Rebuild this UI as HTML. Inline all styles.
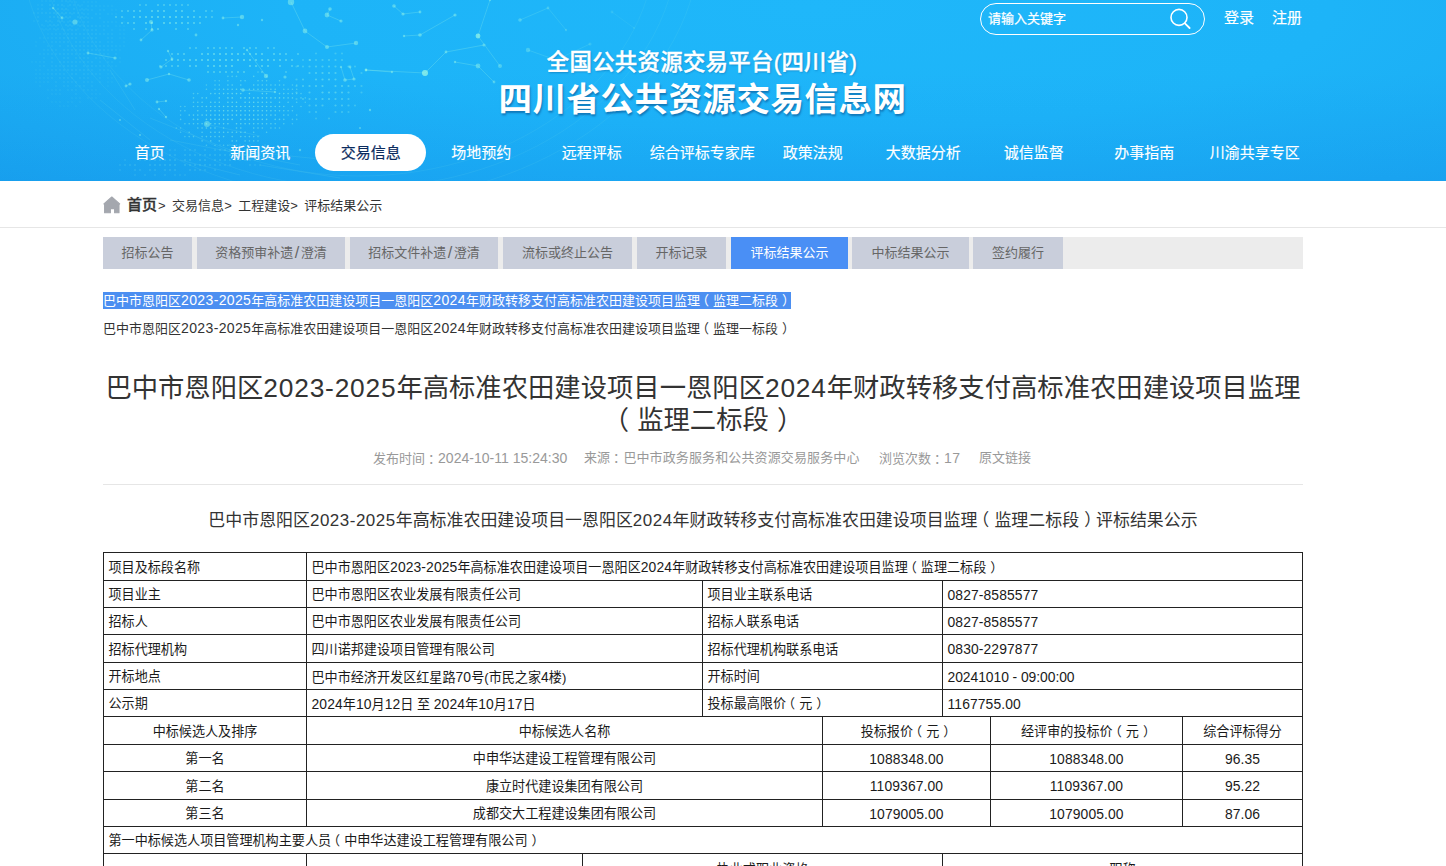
<!DOCTYPE html>
<html lang="zh-CN">
<head>
<meta charset="utf-8">
<title>四川省公共资源交易信息网</title>
<style>
*{margin:0;padding:0;box-sizing:border-box;}
html,body{width:1446px;height:866px;overflow:hidden;background:#fff;}
body{font-family:"Liberation Sans","Noto Sans CJK SC",sans-serif;font-size:13px;color:#333;position:relative;}
a{color:inherit;text-decoration:none;}
i{font-style:normal;letter-spacing:0.03em;}
b.pl,b.pr{font-weight:inherit;position:relative;}
b.pl{left:-0.31em;}
b.pr{left:0.31em;}
b.pc{font-weight:inherit;position:relative;left:0.22em;}
.lst i,.meta i{font-size:1.08em;letter-spacing:0.025em;}
.title i{letter-spacing:0.03em;}
.sub i{letter-spacing:0.031em;}
.header{position:absolute;left:0;top:0;width:1446px;height:181px;overflow:hidden;
 background:linear-gradient(180deg,rgba(0,80,220,0) 40%,rgba(0,80,220,0.09) 100%),radial-gradient(ellipse 80% 150% at 56% 5%,#1fb7fa 0%,#1db4f8 45%,#1babf2 80%,#19a5ee 100%);}
.header svg.net{position:absolute;left:0;top:0;}
.search{position:absolute;left:980px;top:3px;width:225px;height:32px;border:1px solid #fff;border-radius:16px;}
.search span{position:absolute;left:7px;top:0;line-height:29px;font-size:13px;color:#fff;-webkit-text-stroke:0.25px #fff;}
.search svg{position:absolute;left:186px;top:3px;}
.login{position:absolute;top:8px;font-size:15px;line-height:20px;color:#fff;-webkit-text-stroke:0.2px #fff;}
.t1{position:absolute;left:0;width:1404px;text-align:center;top:47px;font-size:22.4px;letter-spacing:0.3px;line-height:32px;color:#fff;font-weight:500;-webkit-text-stroke:0.4px #fff;text-shadow:1px 1px 2px rgba(0,60,120,0.35);white-space:nowrap;}
.t2{position:absolute;left:0;width:1405px;text-align:center;top:77.5px;font-size:33.5px;letter-spacing:0.5px;line-height:44px;color:#fff;font-weight:700;text-shadow:1px 2px 2px rgba(0,50,110,0.45);white-space:nowrap;}
.nav{position:absolute;left:94.5px;top:134px;height:37px;display:flex;}
.nav a{display:block;width:110.5px;height:37px;line-height:38px;text-align:center;font-size:15px;color:#fff;border-radius:19px;white-space:nowrap;-webkit-text-stroke:0.15px #fff;}
.nav a.on{background:#fff;color:#0b2b5e;-webkit-text-stroke:0.2px #0b2b5e;width:111px;margin:0 -0.25px;}
.crumb{position:absolute;left:103px;top:181px;width:1200px;height:46px;}
.cline{position:absolute;left:0;top:227px;width:1446px;height:1px;background:#e6e6e6;}
.crumb svg{position:absolute;left:0.3px;top:15.2px;}
.crumb i{letter-spacing:2.9px;}
i.sl{letter-spacing:0;padding:0 1.5px;font-size:1.25em;line-height:1;position:relative;top:0.5px;}
.crumb .h{position:absolute;left:24px;top:14px;font-size:15px;line-height:20px;font-weight:500;-webkit-text-stroke:0.35px #333;color:#333;}
.crumb .p{position:absolute;left:55px;top:15px;font-size:13px;line-height:20px;color:#333;white-space:pre;}
.tabs{position:absolute;left:103px;top:237px;width:1200px;height:32px;background:#ececec;}
.tabs a{position:absolute;top:0;height:32px;line-height:32px;text-align:center;font-size:13px;color:#666;background:#c9cedb;white-space:nowrap;}
.tabs a.on{background:#4a8ff5;color:#fff;}
.lst{position:absolute;left:103px;font-size:13px;line-height:17px;color:#333;white-space:nowrap;}
.lst.sel span{background:#4c8ff1;color:#fff;display:inline-block;height:17px;}
.title{position:absolute;left:103px;width:1200px;top:372.2px;text-align:center;font-size:26.33px;line-height:32px;color:#333;font-weight:400;white-space:nowrap;}
.meta{position:absolute;left:0;width:1446px;top:448px;font-size:13px;line-height:20px;color:#999;white-space:nowrap;}
.meta span{position:absolute;top:0;}
.hr{position:absolute;left:103px;width:1200px;top:484px;height:1px;background:#e6e6e6;}
.sub{position:absolute;left:103px;width:1200px;top:509.2px;text-align:center;font-size:16.95px;line-height:24px;color:#333;white-space:nowrap;}
table{position:absolute;left:103px;top:552px;width:1199px;border-collapse:collapse;table-layout:fixed;font-size:13.1px;color:#1a1a1a;}
td i{font-size:1.06em;letter-spacing:0.008em;}
td{border:1px solid #222;height:27px;padding:2px 0 0 4.5px;line-height:18px;vertical-align:middle;white-space:nowrap;overflow:hidden;}
td.c{text-align:center;padding:2px 0 0 0;}
tr.h28 td{height:28px;}
</style>
</head>
<body>
<div class="header">
 <svg class="net" width="700" height="181" viewBox="0 0 700 181"><circle cx="140.0" cy="5.0" r="1.1" fill="#a8ffe4" opacity="0.28"/><circle cx="146.0" cy="5.0" r="1.1" fill="#a8ffe4" opacity="0.30"/><circle cx="158.0" cy="5.0" r="1.1" fill="#a8ffe4" opacity="0.33"/><circle cx="164.0" cy="5.0" r="1.1" fill="#a8ffe4" opacity="0.33"/><circle cx="170.0" cy="5.0" r="1.1" fill="#a8ffe4" opacity="0.33"/><circle cx="176.0" cy="5.0" r="1.1" fill="#a8ffe4" opacity="0.32"/><circle cx="182.0" cy="5.0" r="1.1" fill="#a8ffe4" opacity="0.31"/><circle cx="188.0" cy="5.0" r="1.1" fill="#a8ffe4" opacity="0.29"/><circle cx="122.0" cy="11.0" r="1.1" fill="#a8ffe4" opacity="0.31"/><circle cx="128.0" cy="11.0" r="1.1" fill="#a8ffe4" opacity="0.35"/><circle cx="134.0" cy="11.0" r="1.1" fill="#a8ffe4" opacity="0.38"/><circle cx="140.0" cy="11.0" r="1.1" fill="#a8ffe4" opacity="0.40"/><circle cx="152.0" cy="11.0" r="1.1" fill="#a8ffe4" opacity="0.44"/><circle cx="158.0" cy="11.0" r="1.1" fill="#a8ffe4" opacity="0.45"/><circle cx="164.0" cy="11.0" r="1.1" fill="#a8ffe4" opacity="0.45"/><circle cx="176.0" cy="11.0" r="1.1" fill="#a8ffe4" opacity="0.44"/><circle cx="182.0" cy="11.0" r="1.1" fill="#a8ffe4" opacity="0.43"/><circle cx="194.0" cy="11.0" r="1.1" fill="#a8ffe4" opacity="0.39"/><circle cx="206.0" cy="11.0" r="1.1" fill="#a8ffe4" opacity="0.33"/><circle cx="212.0" cy="11.0" r="1.1" fill="#a8ffe4" opacity="0.29"/><circle cx="116.0" cy="17.0" r="1.1" fill="#a8ffe4" opacity="0.32"/><circle cx="122.0" cy="17.0" r="1.1" fill="#a8ffe4" opacity="0.36"/><circle cx="134.0" cy="17.0" r="1.1" fill="#a8ffe4" opacity="0.43"/><circle cx="140.0" cy="17.0" r="1.1" fill="#a8ffe4" opacity="0.45"/><circle cx="146.0" cy="17.0" r="1.1" fill="#a8ffe4" opacity="0.47"/><circle cx="152.0" cy="17.0" r="1.1" fill="#a8ffe4" opacity="0.49"/><circle cx="158.0" cy="17.0" r="1.1" fill="#a8ffe4" opacity="0.50"/><circle cx="164.0" cy="17.0" r="1.1" fill="#a8ffe4" opacity="0.50"/><circle cx="170.0" cy="17.0" r="1.1" fill="#a8ffe4" opacity="0.50"/><circle cx="176.0" cy="17.0" r="1.1" fill="#a8ffe4" opacity="0.49"/><circle cx="182.0" cy="17.0" r="1.1" fill="#a8ffe4" opacity="0.48"/><circle cx="188.0" cy="17.0" r="1.1" fill="#a8ffe4" opacity="0.46"/><circle cx="194.0" cy="17.0" r="1.1" fill="#a8ffe4" opacity="0.44"/><circle cx="200.0" cy="17.0" r="1.1" fill="#a8ffe4" opacity="0.41"/><circle cx="206.0" cy="17.0" r="1.1" fill="#a8ffe4" opacity="0.37"/><circle cx="212.0" cy="17.0" r="1.1" fill="#a8ffe4" opacity="0.33"/><circle cx="122.0" cy="23.0" r="1.1" fill="#a8ffe4" opacity="0.34"/><circle cx="128.0" cy="23.0" r="1.1" fill="#a8ffe4" opacity="0.37"/><circle cx="134.0" cy="23.0" r="1.1" fill="#a8ffe4" opacity="0.40"/><circle cx="146.0" cy="23.0" r="1.1" fill="#a8ffe4" opacity="0.45"/><circle cx="152.0" cy="23.0" r="1.1" fill="#a8ffe4" opacity="0.46"/><circle cx="164.0" cy="23.0" r="1.1" fill="#a8ffe4" opacity="0.47"/><circle cx="170.0" cy="23.0" r="1.1" fill="#a8ffe4" opacity="0.47"/><circle cx="176.0" cy="23.0" r="1.1" fill="#a8ffe4" opacity="0.47"/><circle cx="182.0" cy="23.0" r="1.1" fill="#a8ffe4" opacity="0.45"/><circle cx="188.0" cy="23.0" r="1.1" fill="#a8ffe4" opacity="0.44"/><circle cx="194.0" cy="23.0" r="1.1" fill="#a8ffe4" opacity="0.41"/><circle cx="200.0" cy="23.0" r="1.1" fill="#a8ffe4" opacity="0.38"/><circle cx="134.0" cy="29.0" r="1.1" fill="#a8ffe4" opacity="0.31"/><circle cx="146.0" cy="29.0" r="1.1" fill="#a8ffe4" opacity="0.35"/><circle cx="152.0" cy="29.0" r="1.1" fill="#a8ffe4" opacity="0.37"/><circle cx="158.0" cy="29.0" r="1.1" fill="#a8ffe4" opacity="0.38"/><circle cx="176.0" cy="29.0" r="1.1" fill="#a8ffe4" opacity="0.37"/><circle cx="188.0" cy="29.0" r="1.1" fill="#a8ffe4" opacity="0.34"/><circle cx="190.0" cy="48.0" r="1.1" fill="#a8ffe4" opacity="0.32"/><circle cx="196.0" cy="48.0" r="1.1" fill="#a8ffe4" opacity="0.33"/><circle cx="208.0" cy="48.0" r="1.1" fill="#a8ffe4" opacity="0.36"/><circle cx="214.0" cy="48.0" r="1.1" fill="#a8ffe4" opacity="0.36"/><circle cx="220.0" cy="48.0" r="1.1" fill="#a8ffe4" opacity="0.37"/><circle cx="226.0" cy="48.0" r="1.1" fill="#a8ffe4" opacity="0.37"/><circle cx="232.0" cy="48.0" r="1.1" fill="#a8ffe4" opacity="0.37"/><circle cx="244.0" cy="48.0" r="1.1" fill="#a8ffe4" opacity="0.37"/><circle cx="250.0" cy="48.0" r="1.1" fill="#a8ffe4" opacity="0.36"/><circle cx="256.0" cy="48.0" r="1.1" fill="#a8ffe4" opacity="0.36"/><circle cx="268.0" cy="48.0" r="1.1" fill="#a8ffe4" opacity="0.33"/><circle cx="274.0" cy="48.0" r="1.1" fill="#a8ffe4" opacity="0.32"/><circle cx="172.0" cy="54.0" r="1.1" fill="#a8ffe4" opacity="0.35"/><circle cx="178.0" cy="54.0" r="1.1" fill="#a8ffe4" opacity="0.38"/><circle cx="184.0" cy="54.0" r="1.1" fill="#a8ffe4" opacity="0.39"/><circle cx="202.0" cy="54.0" r="1.1" fill="#a8ffe4" opacity="0.44"/><circle cx="208.0" cy="54.0" r="1.1" fill="#a8ffe4" opacity="0.45"/><circle cx="214.0" cy="54.0" r="1.1" fill="#a8ffe4" opacity="0.46"/><circle cx="220.0" cy="54.0" r="1.1" fill="#a8ffe4" opacity="0.46"/><circle cx="226.0" cy="54.0" r="1.1" fill="#a8ffe4" opacity="0.47"/><circle cx="232.0" cy="54.0" r="1.1" fill="#a8ffe4" opacity="0.47"/><circle cx="238.0" cy="54.0" r="1.1" fill="#a8ffe4" opacity="0.47"/><circle cx="244.0" cy="54.0" r="1.1" fill="#a8ffe4" opacity="0.46"/><circle cx="250.0" cy="54.0" r="1.1" fill="#a8ffe4" opacity="0.46"/><circle cx="256.0" cy="54.0" r="1.1" fill="#a8ffe4" opacity="0.45"/><circle cx="262.0" cy="54.0" r="1.1" fill="#a8ffe4" opacity="0.44"/><circle cx="274.0" cy="54.0" r="1.1" fill="#a8ffe4" opacity="0.41"/><circle cx="280.0" cy="54.0" r="1.1" fill="#a8ffe4" opacity="0.39"/><circle cx="286.0" cy="54.0" r="1.1" fill="#a8ffe4" opacity="0.38"/><circle cx="298.0" cy="54.0" r="1.1" fill="#a8ffe4" opacity="0.33"/><circle cx="166.0" cy="60.0" r="1.1" fill="#a8ffe4" opacity="0.36"/><circle cx="172.0" cy="60.0" r="1.1" fill="#a8ffe4" opacity="0.39"/><circle cx="178.0" cy="60.0" r="1.1" fill="#a8ffe4" opacity="0.41"/><circle cx="184.0" cy="60.0" r="1.1" fill="#a8ffe4" opacity="0.43"/><circle cx="190.0" cy="60.0" r="1.1" fill="#a8ffe4" opacity="0.44"/><circle cx="196.0" cy="60.0" r="1.1" fill="#a8ffe4" opacity="0.46"/><circle cx="202.0" cy="60.0" r="1.1" fill="#a8ffe4" opacity="0.47"/><circle cx="208.0" cy="60.0" r="1.1" fill="#a8ffe4" opacity="0.48"/><circle cx="214.0" cy="60.0" r="1.1" fill="#a8ffe4" opacity="0.49"/><circle cx="220.0" cy="60.0" r="1.1" fill="#a8ffe4" opacity="0.50"/><circle cx="226.0" cy="60.0" r="1.1" fill="#a8ffe4" opacity="0.50"/><circle cx="232.0" cy="60.0" r="1.1" fill="#a8ffe4" opacity="0.50"/><circle cx="238.0" cy="60.0" r="1.1" fill="#a8ffe4" opacity="0.50"/><circle cx="244.0" cy="60.0" r="1.1" fill="#a8ffe4" opacity="0.50"/><circle cx="250.0" cy="60.0" r="1.1" fill="#a8ffe4" opacity="0.49"/><circle cx="256.0" cy="60.0" r="1.1" fill="#a8ffe4" opacity="0.48"/><circle cx="262.0" cy="60.0" r="1.1" fill="#a8ffe4" opacity="0.47"/><circle cx="268.0" cy="60.0" r="1.1" fill="#a8ffe4" opacity="0.46"/><circle cx="274.0" cy="60.0" r="1.1" fill="#a8ffe4" opacity="0.44"/><circle cx="280.0" cy="60.0" r="1.1" fill="#a8ffe4" opacity="0.43"/><circle cx="286.0" cy="60.0" r="1.1" fill="#a8ffe4" opacity="0.41"/><circle cx="292.0" cy="60.0" r="1.1" fill="#a8ffe4" opacity="0.39"/><circle cx="310.0" cy="60.0" r="1.1" fill="#a8ffe4" opacity="0.31"/><circle cx="160.0" cy="66.0" r="1.1" fill="#a8ffe4" opacity="0.30"/><circle cx="166.0" cy="66.0" r="1.1" fill="#a8ffe4" opacity="0.33"/><circle cx="172.0" cy="66.0" r="1.1" fill="#a8ffe4" opacity="0.35"/><circle cx="178.0" cy="66.0" r="1.1" fill="#a8ffe4" opacity="0.38"/><circle cx="190.0" cy="66.0" r="1.1" fill="#a8ffe4" opacity="0.41"/><circle cx="196.0" cy="66.0" r="1.1" fill="#a8ffe4" opacity="0.43"/><circle cx="208.0" cy="66.0" r="1.1" fill="#a8ffe4" opacity="0.45"/><circle cx="214.0" cy="66.0" r="1.1" fill="#a8ffe4" opacity="0.46"/><circle cx="220.0" cy="66.0" r="1.1" fill="#a8ffe4" opacity="0.46"/><circle cx="226.0" cy="66.0" r="1.1" fill="#a8ffe4" opacity="0.47"/><circle cx="232.0" cy="66.0" r="1.1" fill="#a8ffe4" opacity="0.47"/><circle cx="250.0" cy="66.0" r="1.1" fill="#a8ffe4" opacity="0.46"/><circle cx="256.0" cy="66.0" r="1.1" fill="#a8ffe4" opacity="0.45"/><circle cx="262.0" cy="66.0" r="1.1" fill="#a8ffe4" opacity="0.44"/><circle cx="268.0" cy="66.0" r="1.1" fill="#a8ffe4" opacity="0.43"/><circle cx="280.0" cy="66.0" r="1.1" fill="#a8ffe4" opacity="0.39"/><circle cx="292.0" cy="66.0" r="1.1" fill="#a8ffe4" opacity="0.35"/><circle cx="298.0" cy="66.0" r="1.1" fill="#a8ffe4" opacity="0.33"/><circle cx="208.0" cy="72.0" r="1.1" fill="#a8ffe4" opacity="0.36"/><circle cx="214.0" cy="72.0" r="1.1" fill="#a8ffe4" opacity="0.36"/><circle cx="220.0" cy="72.0" r="1.1" fill="#a8ffe4" opacity="0.37"/><circle cx="226.0" cy="72.0" r="1.1" fill="#a8ffe4" opacity="0.37"/><circle cx="232.0" cy="72.0" r="1.1" fill="#a8ffe4" opacity="0.37"/><circle cx="238.0" cy="72.0" r="1.1" fill="#a8ffe4" opacity="0.37"/><circle cx="244.0" cy="72.0" r="1.1" fill="#a8ffe4" opacity="0.37"/><circle cx="262.0" cy="72.0" r="1.1" fill="#a8ffe4" opacity="0.34"/><circle cx="286.0" cy="72.0" r="1.1" fill="#a8ffe4" opacity="0.28"/><circle cx="258.0" cy="72.1" r="0.8" fill="#a8ffe4" opacity="0.30"/><circle cx="227.9" cy="76.4" r="0.8" fill="#a8ffe4" opacity="0.31"/><circle cx="232.2" cy="76.4" r="0.8" fill="#a8ffe4" opacity="0.32"/><circle cx="236.5" cy="76.4" r="0.8" fill="#a8ffe4" opacity="0.33"/><circle cx="253.7" cy="76.4" r="0.8" fill="#a8ffe4" opacity="0.36"/><circle cx="266.6" cy="76.4" r="0.8" fill="#a8ffe4" opacity="0.35"/><circle cx="215.0" cy="80.7" r="0.8" fill="#a8ffe4" opacity="0.31"/><circle cx="219.3" cy="80.7" r="0.8" fill="#a8ffe4" opacity="0.33"/><circle cx="227.9" cy="80.7" r="0.8" fill="#a8ffe4" opacity="0.36"/><circle cx="240.8" cy="80.7" r="0.8" fill="#a8ffe4" opacity="0.39"/><circle cx="245.1" cy="80.7" r="0.8" fill="#a8ffe4" opacity="0.40"/><circle cx="258.0" cy="80.7" r="0.8" fill="#a8ffe4" opacity="0.40"/><circle cx="262.3" cy="80.7" r="0.8" fill="#a8ffe4" opacity="0.40"/><circle cx="266.6" cy="80.7" r="0.8" fill="#a8ffe4" opacity="0.39"/><circle cx="279.5" cy="80.7" r="0.8" fill="#a8ffe4" opacity="0.36"/><circle cx="206.4" cy="85.0" r="0.8" fill="#a8ffe4" opacity="0.32"/><circle cx="215.0" cy="85.0" r="0.8" fill="#a8ffe4" opacity="0.36"/><circle cx="219.3" cy="85.0" r="0.8" fill="#a8ffe4" opacity="0.38"/><circle cx="227.9" cy="85.0" r="0.8" fill="#a8ffe4" opacity="0.41"/><circle cx="232.2" cy="85.0" r="0.8" fill="#a8ffe4" opacity="0.42"/><circle cx="240.8" cy="85.0" r="0.8" fill="#a8ffe4" opacity="0.44"/><circle cx="253.7" cy="85.0" r="0.8" fill="#a8ffe4" opacity="0.44"/><circle cx="258.0" cy="85.0" r="0.8" fill="#a8ffe4" opacity="0.44"/><circle cx="262.3" cy="85.0" r="0.8" fill="#a8ffe4" opacity="0.44"/><circle cx="266.6" cy="85.0" r="0.8" fill="#a8ffe4" opacity="0.43"/><circle cx="270.9" cy="85.0" r="0.8" fill="#a8ffe4" opacity="0.42"/><circle cx="275.2" cy="85.0" r="0.8" fill="#a8ffe4" opacity="0.41"/><circle cx="279.5" cy="85.0" r="0.8" fill="#a8ffe4" opacity="0.40"/><circle cx="283.8" cy="85.0" r="0.8" fill="#a8ffe4" opacity="0.38"/><circle cx="292.4" cy="85.0" r="0.8" fill="#a8ffe4" opacity="0.34"/><circle cx="296.7" cy="85.0" r="0.8" fill="#a8ffe4" opacity="0.32"/><circle cx="206.4" cy="89.3" r="0.8" fill="#a8ffe4" opacity="0.36"/><circle cx="215.0" cy="89.3" r="0.8" fill="#a8ffe4" opacity="0.40"/><circle cx="219.3" cy="89.3" r="0.8" fill="#a8ffe4" opacity="0.42"/><circle cx="223.6" cy="89.3" r="0.8" fill="#a8ffe4" opacity="0.44"/><circle cx="227.9" cy="89.3" r="0.8" fill="#a8ffe4" opacity="0.45"/><circle cx="232.2" cy="89.3" r="0.8" fill="#a8ffe4" opacity="0.46"/><circle cx="236.5" cy="89.3" r="0.8" fill="#a8ffe4" opacity="0.47"/><circle cx="240.8" cy="89.3" r="0.8" fill="#a8ffe4" opacity="0.47"/><circle cx="249.4" cy="89.3" r="0.8" fill="#a8ffe4" opacity="0.48"/><circle cx="253.7" cy="89.3" r="0.8" fill="#a8ffe4" opacity="0.48"/><circle cx="258.0" cy="89.3" r="0.8" fill="#a8ffe4" opacity="0.47"/><circle cx="262.3" cy="89.3" r="0.8" fill="#a8ffe4" opacity="0.47"/><circle cx="266.6" cy="89.3" r="0.8" fill="#a8ffe4" opacity="0.46"/><circle cx="270.9" cy="89.3" r="0.8" fill="#a8ffe4" opacity="0.45"/><circle cx="275.2" cy="89.3" r="0.8" fill="#a8ffe4" opacity="0.44"/><circle cx="283.8" cy="89.3" r="0.8" fill="#a8ffe4" opacity="0.41"/><circle cx="288.1" cy="89.3" r="0.8" fill="#a8ffe4" opacity="0.39"/><circle cx="292.4" cy="89.3" r="0.8" fill="#a8ffe4" opacity="0.37"/><circle cx="296.7" cy="89.3" r="0.8" fill="#a8ffe4" opacity="0.35"/><circle cx="193.5" cy="93.6" r="0.8" fill="#a8ffe4" opacity="0.33"/><circle cx="197.8" cy="93.6" r="0.8" fill="#a8ffe4" opacity="0.36"/><circle cx="210.7" cy="93.6" r="0.8" fill="#a8ffe4" opacity="0.42"/><circle cx="215.0" cy="93.6" r="0.8" fill="#a8ffe4" opacity="0.44"/><circle cx="219.3" cy="93.6" r="0.8" fill="#a8ffe4" opacity="0.46"/><circle cx="223.6" cy="93.6" r="0.8" fill="#a8ffe4" opacity="0.47"/><circle cx="227.9" cy="93.6" r="0.8" fill="#a8ffe4" opacity="0.48"/><circle cx="232.2" cy="93.6" r="0.8" fill="#a8ffe4" opacity="0.49"/><circle cx="236.5" cy="93.6" r="0.8" fill="#a8ffe4" opacity="0.50"/><circle cx="240.8" cy="93.6" r="0.8" fill="#a8ffe4" opacity="0.50"/><circle cx="249.4" cy="93.6" r="0.8" fill="#a8ffe4" opacity="0.50"/><circle cx="262.3" cy="93.6" r="0.8" fill="#a8ffe4" opacity="0.49"/><circle cx="266.6" cy="93.6" r="0.8" fill="#a8ffe4" opacity="0.48"/><circle cx="279.5" cy="93.6" r="0.8" fill="#a8ffe4" opacity="0.44"/><circle cx="283.8" cy="93.6" r="0.8" fill="#a8ffe4" opacity="0.43"/><circle cx="288.1" cy="93.6" r="0.8" fill="#a8ffe4" opacity="0.41"/><circle cx="292.4" cy="93.6" r="0.8" fill="#a8ffe4" opacity="0.38"/><circle cx="296.7" cy="93.6" r="0.8" fill="#a8ffe4" opacity="0.36"/><circle cx="301.0" cy="93.6" r="0.8" fill="#a8ffe4" opacity="0.33"/><circle cx="193.5" cy="97.9" r="0.8" fill="#a8ffe4" opacity="0.36"/><circle cx="202.1" cy="97.9" r="0.8" fill="#a8ffe4" opacity="0.41"/><circle cx="206.4" cy="97.9" r="0.8" fill="#a8ffe4" opacity="0.43"/><circle cx="219.3" cy="97.9" r="0.8" fill="#a8ffe4" opacity="0.48"/><circle cx="227.9" cy="97.9" r="0.8" fill="#a8ffe4" opacity="0.51"/><circle cx="232.2" cy="97.9" r="0.8" fill="#a8ffe4" opacity="0.51"/><circle cx="240.8" cy="97.9" r="0.8" fill="#a8ffe4" opacity="0.52"/><circle cx="245.1" cy="97.9" r="0.8" fill="#a8ffe4" opacity="0.52"/><circle cx="249.4" cy="97.9" r="0.8" fill="#a8ffe4" opacity="0.52"/><circle cx="253.7" cy="97.9" r="0.8" fill="#a8ffe4" opacity="0.52"/><circle cx="258.0" cy="97.9" r="0.8" fill="#a8ffe4" opacity="0.52"/><circle cx="262.3" cy="97.9" r="0.8" fill="#a8ffe4" opacity="0.51"/><circle cx="266.6" cy="97.9" r="0.8" fill="#a8ffe4" opacity="0.50"/><circle cx="270.9" cy="97.9" r="0.8" fill="#a8ffe4" opacity="0.49"/><circle cx="275.2" cy="97.9" r="0.8" fill="#a8ffe4" opacity="0.47"/><circle cx="279.5" cy="97.9" r="0.8" fill="#a8ffe4" opacity="0.46"/><circle cx="283.8" cy="97.9" r="0.8" fill="#a8ffe4" opacity="0.44"/><circle cx="288.1" cy="97.9" r="0.8" fill="#a8ffe4" opacity="0.42"/><circle cx="292.4" cy="97.9" r="0.8" fill="#a8ffe4" opacity="0.40"/><circle cx="301.0" cy="97.9" r="0.8" fill="#a8ffe4" opacity="0.34"/><circle cx="305.3" cy="97.9" r="0.8" fill="#a8ffe4" opacity="0.31"/><circle cx="193.5" cy="102.2" r="0.8" fill="#a8ffe4" opacity="0.39"/><circle cx="197.8" cy="102.2" r="0.8" fill="#a8ffe4" opacity="0.41"/><circle cx="202.1" cy="102.2" r="0.8" fill="#a8ffe4" opacity="0.44"/><circle cx="210.7" cy="102.2" r="0.8" fill="#a8ffe4" opacity="0.47"/><circle cx="215.0" cy="102.2" r="0.8" fill="#a8ffe4" opacity="0.49"/><circle cx="219.3" cy="102.2" r="0.8" fill="#a8ffe4" opacity="0.50"/><circle cx="227.9" cy="102.2" r="0.8" fill="#a8ffe4" opacity="0.52"/><circle cx="232.2" cy="102.2" r="0.8" fill="#a8ffe4" opacity="0.53"/><circle cx="236.5" cy="102.2" r="0.8" fill="#a8ffe4" opacity="0.54"/><circle cx="245.1" cy="102.2" r="0.8" fill="#a8ffe4" opacity="0.54"/><circle cx="249.4" cy="102.2" r="0.8" fill="#a8ffe4" opacity="0.54"/><circle cx="253.7" cy="102.2" r="0.8" fill="#a8ffe4" opacity="0.53"/><circle cx="258.0" cy="102.2" r="0.8" fill="#a8ffe4" opacity="0.53"/><circle cx="262.3" cy="102.2" r="0.8" fill="#a8ffe4" opacity="0.52"/><circle cx="266.6" cy="102.2" r="0.8" fill="#a8ffe4" opacity="0.51"/><circle cx="270.9" cy="102.2" r="0.8" fill="#a8ffe4" opacity="0.50"/><circle cx="279.5" cy="102.2" r="0.8" fill="#a8ffe4" opacity="0.46"/><circle cx="288.1" cy="102.2" r="0.8" fill="#a8ffe4" opacity="0.42"/><circle cx="296.7" cy="102.2" r="0.8" fill="#a8ffe4" opacity="0.37"/><circle cx="305.3" cy="102.2" r="0.8" fill="#a8ffe4" opacity="0.31"/><circle cx="180.6" cy="106.5" r="0.8" fill="#a8ffe4" opacity="0.33"/><circle cx="184.9" cy="106.5" r="0.8" fill="#a8ffe4" opacity="0.36"/><circle cx="193.5" cy="106.5" r="0.8" fill="#a8ffe4" opacity="0.41"/><circle cx="197.8" cy="106.5" r="0.8" fill="#a8ffe4" opacity="0.43"/><circle cx="202.1" cy="106.5" r="0.8" fill="#a8ffe4" opacity="0.45"/><circle cx="206.4" cy="106.5" r="0.8" fill="#a8ffe4" opacity="0.47"/><circle cx="210.7" cy="106.5" r="0.8" fill="#a8ffe4" opacity="0.49"/><circle cx="215.0" cy="106.5" r="0.8" fill="#a8ffe4" opacity="0.51"/><circle cx="219.3" cy="106.5" r="0.8" fill="#a8ffe4" opacity="0.52"/><circle cx="223.6" cy="106.5" r="0.8" fill="#a8ffe4" opacity="0.53"/><circle cx="227.9" cy="106.5" r="0.8" fill="#a8ffe4" opacity="0.54"/><circle cx="232.2" cy="106.5" r="0.8" fill="#a8ffe4" opacity="0.54"/><circle cx="236.5" cy="106.5" r="0.8" fill="#a8ffe4" opacity="0.55"/><circle cx="240.8" cy="106.5" r="0.8" fill="#a8ffe4" opacity="0.55"/><circle cx="245.1" cy="106.5" r="0.8" fill="#a8ffe4" opacity="0.55"/><circle cx="249.4" cy="106.5" r="0.8" fill="#a8ffe4" opacity="0.54"/><circle cx="253.7" cy="106.5" r="0.8" fill="#a8ffe4" opacity="0.54"/><circle cx="258.0" cy="106.5" r="0.8" fill="#a8ffe4" opacity="0.53"/><circle cx="262.3" cy="106.5" r="0.8" fill="#a8ffe4" opacity="0.52"/><circle cx="266.6" cy="106.5" r="0.8" fill="#a8ffe4" opacity="0.51"/><circle cx="270.9" cy="106.5" r="0.8" fill="#a8ffe4" opacity="0.50"/><circle cx="275.2" cy="106.5" r="0.8" fill="#a8ffe4" opacity="0.48"/><circle cx="279.5" cy="106.5" r="0.8" fill="#a8ffe4" opacity="0.46"/><circle cx="283.8" cy="106.5" r="0.8" fill="#a8ffe4" opacity="0.44"/><circle cx="292.4" cy="106.5" r="0.8" fill="#a8ffe4" opacity="0.39"/><circle cx="301.0" cy="106.5" r="0.8" fill="#a8ffe4" opacity="0.34"/><circle cx="180.6" cy="110.8" r="0.8" fill="#a8ffe4" opacity="0.34"/><circle cx="184.9" cy="110.8" r="0.8" fill="#a8ffe4" opacity="0.37"/><circle cx="197.8" cy="110.8" r="0.8" fill="#a8ffe4" opacity="0.45"/><circle cx="206.4" cy="110.8" r="0.8" fill="#a8ffe4" opacity="0.48"/><circle cx="210.7" cy="110.8" r="0.8" fill="#a8ffe4" opacity="0.50"/><circle cx="215.0" cy="110.8" r="0.8" fill="#a8ffe4" opacity="0.51"/><circle cx="219.3" cy="110.8" r="0.8" fill="#a8ffe4" opacity="0.53"/><circle cx="223.6" cy="110.8" r="0.8" fill="#a8ffe4" opacity="0.53"/><circle cx="227.9" cy="110.8" r="0.8" fill="#a8ffe4" opacity="0.54"/><circle cx="232.2" cy="110.8" r="0.8" fill="#a8ffe4" opacity="0.55"/><circle cx="236.5" cy="110.8" r="0.8" fill="#a8ffe4" opacity="0.55"/><circle cx="240.8" cy="110.8" r="0.8" fill="#a8ffe4" opacity="0.55"/><circle cx="245.1" cy="110.8" r="0.8" fill="#a8ffe4" opacity="0.55"/><circle cx="249.4" cy="110.8" r="0.8" fill="#a8ffe4" opacity="0.54"/><circle cx="253.7" cy="110.8" r="0.8" fill="#a8ffe4" opacity="0.54"/><circle cx="258.0" cy="110.8" r="0.8" fill="#a8ffe4" opacity="0.53"/><circle cx="262.3" cy="110.8" r="0.8" fill="#a8ffe4" opacity="0.52"/><circle cx="266.6" cy="110.8" r="0.8" fill="#a8ffe4" opacity="0.51"/><circle cx="270.9" cy="110.8" r="0.8" fill="#a8ffe4" opacity="0.49"/><circle cx="275.2" cy="110.8" r="0.8" fill="#a8ffe4" opacity="0.47"/><circle cx="279.5" cy="110.8" r="0.8" fill="#a8ffe4" opacity="0.46"/><circle cx="283.8" cy="110.8" r="0.8" fill="#a8ffe4" opacity="0.43"/><circle cx="288.1" cy="110.8" r="0.8" fill="#a8ffe4" opacity="0.41"/><circle cx="292.4" cy="110.8" r="0.8" fill="#a8ffe4" opacity="0.38"/><circle cx="180.6" cy="115.1" r="0.8" fill="#a8ffe4" opacity="0.35"/><circle cx="189.2" cy="115.1" r="0.8" fill="#a8ffe4" opacity="0.41"/><circle cx="193.5" cy="115.1" r="0.8" fill="#a8ffe4" opacity="0.43"/><circle cx="197.8" cy="115.1" r="0.8" fill="#a8ffe4" opacity="0.45"/><circle cx="202.1" cy="115.1" r="0.8" fill="#a8ffe4" opacity="0.47"/><circle cx="206.4" cy="115.1" r="0.8" fill="#a8ffe4" opacity="0.49"/><circle cx="210.7" cy="115.1" r="0.8" fill="#a8ffe4" opacity="0.50"/><circle cx="215.0" cy="115.1" r="0.8" fill="#a8ffe4" opacity="0.52"/><circle cx="219.3" cy="115.1" r="0.8" fill="#a8ffe4" opacity="0.53"/><circle cx="223.6" cy="115.1" r="0.8" fill="#a8ffe4" opacity="0.53"/><circle cx="227.9" cy="115.1" r="0.8" fill="#a8ffe4" opacity="0.54"/><circle cx="232.2" cy="115.1" r="0.8" fill="#a8ffe4" opacity="0.54"/><circle cx="236.5" cy="115.1" r="0.8" fill="#a8ffe4" opacity="0.55"/><circle cx="240.8" cy="115.1" r="0.8" fill="#a8ffe4" opacity="0.54"/><circle cx="245.1" cy="115.1" r="0.8" fill="#a8ffe4" opacity="0.54"/><circle cx="249.4" cy="115.1" r="0.8" fill="#a8ffe4" opacity="0.54"/><circle cx="253.7" cy="115.1" r="0.8" fill="#a8ffe4" opacity="0.53"/><circle cx="258.0" cy="115.1" r="0.8" fill="#a8ffe4" opacity="0.52"/><circle cx="262.3" cy="115.1" r="0.8" fill="#a8ffe4" opacity="0.51"/><circle cx="266.6" cy="115.1" r="0.8" fill="#a8ffe4" opacity="0.50"/><circle cx="270.9" cy="115.1" r="0.8" fill="#a8ffe4" opacity="0.48"/><circle cx="275.2" cy="115.1" r="0.8" fill="#a8ffe4" opacity="0.46"/><circle cx="283.8" cy="115.1" r="0.8" fill="#a8ffe4" opacity="0.42"/><circle cx="288.1" cy="115.1" r="0.8" fill="#a8ffe4" opacity="0.39"/><circle cx="296.7" cy="115.1" r="0.8" fill="#a8ffe4" opacity="0.34"/><circle cx="180.6" cy="119.4" r="0.8" fill="#a8ffe4" opacity="0.36"/><circle cx="193.5" cy="119.4" r="0.8" fill="#a8ffe4" opacity="0.43"/><circle cx="197.8" cy="119.4" r="0.8" fill="#a8ffe4" opacity="0.45"/><circle cx="206.4" cy="119.4" r="0.8" fill="#a8ffe4" opacity="0.48"/><circle cx="210.7" cy="119.4" r="0.8" fill="#a8ffe4" opacity="0.50"/><circle cx="215.0" cy="119.4" r="0.8" fill="#a8ffe4" opacity="0.51"/><circle cx="219.3" cy="119.4" r="0.8" fill="#a8ffe4" opacity="0.52"/><circle cx="223.6" cy="119.4" r="0.8" fill="#a8ffe4" opacity="0.53"/><circle cx="227.9" cy="119.4" r="0.8" fill="#a8ffe4" opacity="0.53"/><circle cx="232.2" cy="119.4" r="0.8" fill="#a8ffe4" opacity="0.53"/><circle cx="240.8" cy="119.4" r="0.8" fill="#a8ffe4" opacity="0.53"/><circle cx="245.1" cy="119.4" r="0.8" fill="#a8ffe4" opacity="0.53"/><circle cx="249.4" cy="119.4" r="0.8" fill="#a8ffe4" opacity="0.52"/><circle cx="253.7" cy="119.4" r="0.8" fill="#a8ffe4" opacity="0.52"/><circle cx="258.0" cy="119.4" r="0.8" fill="#a8ffe4" opacity="0.50"/><circle cx="262.3" cy="119.4" r="0.8" fill="#a8ffe4" opacity="0.49"/><circle cx="266.6" cy="119.4" r="0.8" fill="#a8ffe4" opacity="0.48"/><circle cx="275.2" cy="119.4" r="0.8" fill="#a8ffe4" opacity="0.44"/><circle cx="279.5" cy="119.4" r="0.8" fill="#a8ffe4" opacity="0.42"/><circle cx="283.8" cy="119.4" r="0.8" fill="#a8ffe4" opacity="0.40"/><circle cx="292.4" cy="119.4" r="0.8" fill="#a8ffe4" opacity="0.34"/><circle cx="296.7" cy="119.4" r="0.8" fill="#a8ffe4" opacity="0.31"/><circle cx="184.9" cy="123.7" r="0.8" fill="#a8ffe4" opacity="0.38"/><circle cx="189.2" cy="123.7" r="0.8" fill="#a8ffe4" opacity="0.40"/><circle cx="193.5" cy="123.7" r="0.8" fill="#a8ffe4" opacity="0.42"/><circle cx="197.8" cy="123.7" r="0.8" fill="#a8ffe4" opacity="0.44"/><circle cx="202.1" cy="123.7" r="0.8" fill="#a8ffe4" opacity="0.46"/><circle cx="206.4" cy="123.7" r="0.8" fill="#a8ffe4" opacity="0.47"/><circle cx="210.7" cy="123.7" r="0.8" fill="#a8ffe4" opacity="0.49"/><circle cx="215.0" cy="123.7" r="0.8" fill="#a8ffe4" opacity="0.50"/><circle cx="219.3" cy="123.7" r="0.8" fill="#a8ffe4" opacity="0.51"/><circle cx="223.6" cy="123.7" r="0.8" fill="#a8ffe4" opacity="0.51"/><circle cx="227.9" cy="123.7" r="0.8" fill="#a8ffe4" opacity="0.52"/><circle cx="236.5" cy="123.7" r="0.8" fill="#a8ffe4" opacity="0.52"/><circle cx="240.8" cy="123.7" r="0.8" fill="#a8ffe4" opacity="0.51"/><circle cx="245.1" cy="123.7" r="0.8" fill="#a8ffe4" opacity="0.51"/><circle cx="249.4" cy="123.7" r="0.8" fill="#a8ffe4" opacity="0.50"/><circle cx="253.7" cy="123.7" r="0.8" fill="#a8ffe4" opacity="0.49"/><circle cx="258.0" cy="123.7" r="0.8" fill="#a8ffe4" opacity="0.48"/><circle cx="262.3" cy="123.7" r="0.8" fill="#a8ffe4" opacity="0.47"/><circle cx="266.6" cy="123.7" r="0.8" fill="#a8ffe4" opacity="0.45"/><circle cx="270.9" cy="123.7" r="0.8" fill="#a8ffe4" opacity="0.43"/><circle cx="275.2" cy="123.7" r="0.8" fill="#a8ffe4" opacity="0.41"/><circle cx="283.8" cy="123.7" r="0.8" fill="#a8ffe4" opacity="0.37"/><circle cx="292.4" cy="123.7" r="0.8" fill="#a8ffe4" opacity="0.31"/><circle cx="176.3" cy="128.0" r="0.8" fill="#a8ffe4" opacity="0.31"/><circle cx="180.6" cy="128.0" r="0.8" fill="#a8ffe4" opacity="0.34"/><circle cx="197.8" cy="128.0" r="0.8" fill="#a8ffe4" opacity="0.43"/><circle cx="202.1" cy="128.0" r="0.8" fill="#a8ffe4" opacity="0.44"/><circle cx="206.4" cy="128.0" r="0.8" fill="#a8ffe4" opacity="0.46"/><circle cx="210.7" cy="128.0" r="0.8" fill="#a8ffe4" opacity="0.47"/><circle cx="215.0" cy="128.0" r="0.8" fill="#a8ffe4" opacity="0.48"/><circle cx="223.6" cy="128.0" r="0.8" fill="#a8ffe4" opacity="0.49"/><circle cx="236.5" cy="128.0" r="0.8" fill="#a8ffe4" opacity="0.49"/><circle cx="240.8" cy="128.0" r="0.8" fill="#a8ffe4" opacity="0.49"/><circle cx="253.7" cy="128.0" r="0.8" fill="#a8ffe4" opacity="0.47"/><circle cx="258.0" cy="128.0" r="0.8" fill="#a8ffe4" opacity="0.45"/><circle cx="262.3" cy="128.0" r="0.8" fill="#a8ffe4" opacity="0.44"/><circle cx="270.9" cy="128.0" r="0.8" fill="#a8ffe4" opacity="0.40"/><circle cx="275.2" cy="128.0" r="0.8" fill="#a8ffe4" opacity="0.38"/><circle cx="279.5" cy="128.0" r="0.8" fill="#a8ffe4" opacity="0.36"/><circle cx="180.6" cy="132.3" r="0.8" fill="#a8ffe4" opacity="0.32"/><circle cx="189.2" cy="132.3" r="0.8" fill="#a8ffe4" opacity="0.37"/><circle cx="202.1" cy="132.3" r="0.8" fill="#a8ffe4" opacity="0.42"/><circle cx="210.7" cy="132.3" r="0.8" fill="#a8ffe4" opacity="0.44"/><circle cx="215.0" cy="132.3" r="0.8" fill="#a8ffe4" opacity="0.45"/><circle cx="219.3" cy="132.3" r="0.8" fill="#a8ffe4" opacity="0.46"/><circle cx="223.6" cy="132.3" r="0.8" fill="#a8ffe4" opacity="0.46"/><circle cx="227.9" cy="132.3" r="0.8" fill="#a8ffe4" opacity="0.46"/><circle cx="232.2" cy="132.3" r="0.8" fill="#a8ffe4" opacity="0.46"/><circle cx="236.5" cy="132.3" r="0.8" fill="#a8ffe4" opacity="0.46"/><circle cx="240.8" cy="132.3" r="0.8" fill="#a8ffe4" opacity="0.46"/><circle cx="245.1" cy="132.3" r="0.8" fill="#a8ffe4" opacity="0.45"/><circle cx="253.7" cy="132.3" r="0.8" fill="#a8ffe4" opacity="0.43"/><circle cx="266.6" cy="132.3" r="0.8" fill="#a8ffe4" opacity="0.38"/><circle cx="184.9" cy="136.6" r="0.8" fill="#a8ffe4" opacity="0.32"/><circle cx="189.2" cy="136.6" r="0.8" fill="#a8ffe4" opacity="0.34"/><circle cx="193.5" cy="136.6" r="0.8" fill="#a8ffe4" opacity="0.36"/><circle cx="202.1" cy="136.6" r="0.8" fill="#a8ffe4" opacity="0.39"/><circle cx="206.4" cy="136.6" r="0.8" fill="#a8ffe4" opacity="0.40"/><circle cx="210.7" cy="136.6" r="0.8" fill="#a8ffe4" opacity="0.41"/><circle cx="215.0" cy="136.6" r="0.8" fill="#a8ffe4" opacity="0.42"/><circle cx="219.3" cy="136.6" r="0.8" fill="#a8ffe4" opacity="0.42"/><circle cx="223.6" cy="136.6" r="0.8" fill="#a8ffe4" opacity="0.43"/><circle cx="232.2" cy="136.6" r="0.8" fill="#a8ffe4" opacity="0.43"/><circle cx="240.8" cy="136.6" r="0.8" fill="#a8ffe4" opacity="0.42"/><circle cx="245.1" cy="136.6" r="0.8" fill="#a8ffe4" opacity="0.41"/><circle cx="249.4" cy="136.6" r="0.8" fill="#a8ffe4" opacity="0.40"/><circle cx="253.7" cy="136.6" r="0.8" fill="#a8ffe4" opacity="0.39"/><circle cx="258.0" cy="136.6" r="0.8" fill="#a8ffe4" opacity="0.37"/><circle cx="202.1" cy="140.9" r="0.8" fill="#a8ffe4" opacity="0.35"/><circle cx="210.7" cy="140.9" r="0.8" fill="#a8ffe4" opacity="0.37"/><circle cx="219.3" cy="140.9" r="0.8" fill="#a8ffe4" opacity="0.38"/><circle cx="232.2" cy="140.9" r="0.8" fill="#a8ffe4" opacity="0.38"/><circle cx="236.5" cy="140.9" r="0.8" fill="#a8ffe4" opacity="0.38"/><circle cx="245.1" cy="140.9" r="0.8" fill="#a8ffe4" opacity="0.36"/><circle cx="249.4" cy="140.9" r="0.8" fill="#a8ffe4" opacity="0.35"/><circle cx="253.7" cy="140.9" r="0.8" fill="#a8ffe4" opacity="0.34"/><circle cx="258.0" cy="140.9" r="0.8" fill="#a8ffe4" opacity="0.32"/><circle cx="206.4" cy="145.2" r="0.8" fill="#a8ffe4" opacity="0.32"/><circle cx="215.0" cy="145.2" r="0.8" fill="#a8ffe4" opacity="0.33"/><circle cx="223.6" cy="145.2" r="0.8" fill="#a8ffe4" opacity="0.34"/><circle cx="227.9" cy="145.2" r="0.8" fill="#a8ffe4" opacity="0.34"/><circle cx="232.2" cy="145.2" r="0.8" fill="#a8ffe4" opacity="0.33"/><circle cx="236.5" cy="145.2" r="0.8" fill="#a8ffe4" opacity="0.33"/><circle cx="316.0" cy="53.5" r="1.1" fill="#a8ffe4" opacity="0.23"/><circle cx="335.5" cy="53.5" r="1.1" fill="#a8ffe4" opacity="0.24"/><circle cx="342.0" cy="53.5" r="1.1" fill="#a8ffe4" opacity="0.23"/><circle cx="303.0" cy="60.0" r="1.1" fill="#a8ffe4" opacity="0.22"/><circle cx="309.5" cy="60.0" r="1.1" fill="#a8ffe4" opacity="0.26"/><circle cx="316.0" cy="60.0" r="1.1" fill="#a8ffe4" opacity="0.28"/><circle cx="322.5" cy="60.0" r="1.1" fill="#a8ffe4" opacity="0.29"/><circle cx="329.0" cy="60.0" r="1.1" fill="#a8ffe4" opacity="0.30"/><circle cx="335.5" cy="60.0" r="1.1" fill="#a8ffe4" opacity="0.29"/><circle cx="342.0" cy="60.0" r="1.1" fill="#a8ffe4" opacity="0.27"/><circle cx="296.5" cy="66.5" r="1.1" fill="#a8ffe4" opacity="0.22"/><circle cx="303.0" cy="66.5" r="1.1" fill="#a8ffe4" opacity="0.26"/><circle cx="309.5" cy="66.5" r="1.1" fill="#a8ffe4" opacity="0.29"/><circle cx="316.0" cy="66.5" r="1.1" fill="#a8ffe4" opacity="0.32"/><circle cx="322.5" cy="66.5" r="1.1" fill="#a8ffe4" opacity="0.33"/><circle cx="329.0" cy="66.5" r="1.1" fill="#a8ffe4" opacity="0.33"/><circle cx="335.5" cy="66.5" r="1.1" fill="#a8ffe4" opacity="0.33"/><circle cx="348.5" cy="66.5" r="1.1" fill="#a8ffe4" opacity="0.29"/><circle cx="355.0" cy="66.5" r="1.1" fill="#a8ffe4" opacity="0.25"/><circle cx="309.5" cy="73.0" r="1.1" fill="#a8ffe4" opacity="0.32"/><circle cx="316.0" cy="73.0" r="1.1" fill="#a8ffe4" opacity="0.34"/><circle cx="322.5" cy="73.0" r="1.1" fill="#a8ffe4" opacity="0.36"/><circle cx="329.0" cy="73.0" r="1.1" fill="#a8ffe4" opacity="0.36"/><circle cx="335.5" cy="73.0" r="1.1" fill="#a8ffe4" opacity="0.35"/><circle cx="361.5" cy="73.0" r="1.1" fill="#a8ffe4" opacity="0.23"/><circle cx="296.5" cy="79.5" r="1.1" fill="#a8ffe4" opacity="0.26"/><circle cx="303.0" cy="79.5" r="1.1" fill="#a8ffe4" opacity="0.30"/><circle cx="316.0" cy="79.5" r="1.1" fill="#a8ffe4" opacity="0.36"/><circle cx="322.5" cy="79.5" r="1.1" fill="#a8ffe4" opacity="0.37"/><circle cx="329.0" cy="79.5" r="1.1" fill="#a8ffe4" opacity="0.38"/><circle cx="335.5" cy="79.5" r="1.1" fill="#a8ffe4" opacity="0.37"/><circle cx="296.5" cy="86.0" r="1.1" fill="#a8ffe4" opacity="0.26"/><circle cx="303.0" cy="86.0" r="1.1" fill="#a8ffe4" opacity="0.31"/><circle cx="309.5" cy="86.0" r="1.1" fill="#a8ffe4" opacity="0.34"/><circle cx="316.0" cy="86.0" r="1.1" fill="#a8ffe4" opacity="0.36"/><circle cx="322.5" cy="86.0" r="1.1" fill="#a8ffe4" opacity="0.38"/><circle cx="335.5" cy="86.0" r="1.1" fill="#a8ffe4" opacity="0.37"/><circle cx="342.0" cy="86.0" r="1.1" fill="#a8ffe4" opacity="0.36"/><circle cx="348.5" cy="86.0" r="1.1" fill="#a8ffe4" opacity="0.33"/><circle cx="355.0" cy="86.0" r="1.1" fill="#a8ffe4" opacity="0.29"/><circle cx="361.5" cy="86.0" r="1.1" fill="#a8ffe4" opacity="0.25"/><circle cx="296.5" cy="92.5" r="1.1" fill="#a8ffe4" opacity="0.26"/><circle cx="309.5" cy="92.5" r="1.1" fill="#a8ffe4" opacity="0.33"/><circle cx="322.5" cy="92.5" r="1.1" fill="#a8ffe4" opacity="0.37"/><circle cx="329.0" cy="92.5" r="1.1" fill="#a8ffe4" opacity="0.37"/><circle cx="335.5" cy="92.5" r="1.1" fill="#a8ffe4" opacity="0.37"/><circle cx="342.0" cy="92.5" r="1.1" fill="#a8ffe4" opacity="0.35"/><circle cx="348.5" cy="92.5" r="1.1" fill="#a8ffe4" opacity="0.32"/><circle cx="361.5" cy="92.5" r="1.1" fill="#a8ffe4" opacity="0.24"/><circle cx="296.5" cy="99.0" r="1.1" fill="#a8ffe4" opacity="0.24"/><circle cx="303.0" cy="99.0" r="1.1" fill="#a8ffe4" opacity="0.28"/><circle cx="309.5" cy="99.0" r="1.1" fill="#a8ffe4" opacity="0.31"/><circle cx="316.0" cy="99.0" r="1.1" fill="#a8ffe4" opacity="0.34"/><circle cx="322.5" cy="99.0" r="1.1" fill="#a8ffe4" opacity="0.35"/><circle cx="329.0" cy="99.0" r="1.1" fill="#a8ffe4" opacity="0.35"/><circle cx="335.5" cy="99.0" r="1.1" fill="#a8ffe4" opacity="0.35"/><circle cx="342.0" cy="99.0" r="1.1" fill="#a8ffe4" opacity="0.33"/><circle cx="348.5" cy="99.0" r="1.1" fill="#a8ffe4" opacity="0.30"/><circle cx="309.5" cy="105.5" r="1.1" fill="#a8ffe4" opacity="0.28"/><circle cx="316.0" cy="105.5" r="1.1" fill="#a8ffe4" opacity="0.31"/><circle cx="322.5" cy="105.5" r="1.1" fill="#a8ffe4" opacity="0.32"/><circle cx="335.5" cy="105.5" r="1.1" fill="#a8ffe4" opacity="0.32"/><circle cx="342.0" cy="105.5" r="1.1" fill="#a8ffe4" opacity="0.30"/><circle cx="348.5" cy="105.5" r="1.1" fill="#a8ffe4" opacity="0.27"/><circle cx="355.0" cy="105.5" r="1.1" fill="#a8ffe4" opacity="0.24"/><circle cx="309.5" cy="112.0" r="1.1" fill="#a8ffe4" opacity="0.24"/><circle cx="316.0" cy="112.0" r="1.1" fill="#a8ffe4" opacity="0.27"/><circle cx="335.5" cy="112.0" r="1.1" fill="#a8ffe4" opacity="0.28"/><circle cx="342.0" cy="112.0" r="1.1" fill="#a8ffe4" opacity="0.26"/><circle cx="348.5" cy="112.0" r="1.1" fill="#a8ffe4" opacity="0.23"/><circle cx="316.0" cy="118.5" r="1.1" fill="#a8ffe4" opacity="0.21"/><circle cx="329.0" cy="118.5" r="1.1" fill="#a8ffe4" opacity="0.23"/><circle cx="88.0" cy="-6.0" r="0.8" fill="#a8ffe4" opacity="0.09"/><circle cx="96.0" cy="-6.0" r="0.8" fill="#a8ffe4" opacity="0.09"/><circle cx="72.0" cy="-2.0" r="0.8" fill="#a8ffe4" opacity="0.09"/><circle cx="76.0" cy="-2.0" r="0.8" fill="#a8ffe4" opacity="0.10"/><circle cx="84.0" cy="-2.0" r="0.8" fill="#a8ffe4" opacity="0.10"/><circle cx="92.0" cy="-2.0" r="0.8" fill="#a8ffe4" opacity="0.10"/><circle cx="96.0" cy="-2.0" r="0.8" fill="#a8ffe4" opacity="0.10"/><circle cx="100.0" cy="-2.0" r="0.8" fill="#a8ffe4" opacity="0.10"/><circle cx="104.0" cy="-2.0" r="0.8" fill="#a8ffe4" opacity="0.09"/><circle cx="68.0" cy="2.0" r="0.8" fill="#a8ffe4" opacity="0.10"/><circle cx="72.0" cy="2.0" r="0.8" fill="#a8ffe4" opacity="0.10"/><circle cx="76.0" cy="2.0" r="0.8" fill="#a8ffe4" opacity="0.10"/><circle cx="84.0" cy="2.0" r="0.8" fill="#a8ffe4" opacity="0.11"/><circle cx="88.0" cy="2.0" r="0.8" fill="#a8ffe4" opacity="0.11"/><circle cx="92.0" cy="2.0" r="0.8" fill="#a8ffe4" opacity="0.11"/><circle cx="96.0" cy="2.0" r="0.8" fill="#a8ffe4" opacity="0.11"/><circle cx="64.0" cy="6.0" r="0.8" fill="#a8ffe4" opacity="0.10"/><circle cx="68.0" cy="6.0" r="0.8" fill="#a8ffe4" opacity="0.10"/><circle cx="80.0" cy="6.0" r="0.8" fill="#a8ffe4" opacity="0.12"/><circle cx="88.0" cy="6.0" r="0.8" fill="#a8ffe4" opacity="0.12"/><circle cx="92.0" cy="6.0" r="0.8" fill="#a8ffe4" opacity="0.12"/><circle cx="96.0" cy="6.0" r="0.8" fill="#a8ffe4" opacity="0.12"/><circle cx="100.0" cy="6.0" r="0.8" fill="#a8ffe4" opacity="0.11"/><circle cx="104.0" cy="6.0" r="0.8" fill="#a8ffe4" opacity="0.11"/><circle cx="108.0" cy="6.0" r="0.8" fill="#a8ffe4" opacity="0.10"/><circle cx="112.0" cy="6.0" r="0.8" fill="#a8ffe4" opacity="0.10"/><circle cx="56.0" cy="10.0" r="0.8" fill="#a8ffe4" opacity="0.09"/><circle cx="64.0" cy="10.0" r="0.8" fill="#a8ffe4" opacity="0.11"/><circle cx="68.0" cy="10.0" r="0.8" fill="#a8ffe4" opacity="0.11"/><circle cx="80.0" cy="10.0" r="0.8" fill="#a8ffe4" opacity="0.12"/><circle cx="84.0" cy="10.0" r="0.8" fill="#a8ffe4" opacity="0.12"/><circle cx="88.0" cy="10.0" r="0.8" fill="#a8ffe4" opacity="0.13"/><circle cx="92.0" cy="10.0" r="0.8" fill="#a8ffe4" opacity="0.12"/><circle cx="100.0" cy="10.0" r="0.8" fill="#a8ffe4" opacity="0.12"/><circle cx="104.0" cy="10.0" r="0.8" fill="#a8ffe4" opacity="0.12"/><circle cx="112.0" cy="10.0" r="0.8" fill="#a8ffe4" opacity="0.11"/><circle cx="116.0" cy="10.0" r="0.8" fill="#a8ffe4" opacity="0.10"/><circle cx="56.0" cy="14.0" r="0.8" fill="#a8ffe4" opacity="0.10"/><circle cx="60.0" cy="14.0" r="0.8" fill="#a8ffe4" opacity="0.11"/><circle cx="64.0" cy="14.0" r="0.8" fill="#a8ffe4" opacity="0.12"/><circle cx="72.0" cy="14.0" r="0.8" fill="#a8ffe4" opacity="0.12"/><circle cx="84.0" cy="14.0" r="0.8" fill="#a8ffe4" opacity="0.13"/><circle cx="88.0" cy="14.0" r="0.8" fill="#a8ffe4" opacity="0.13"/><circle cx="96.0" cy="14.0" r="0.8" fill="#a8ffe4" opacity="0.13"/><circle cx="100.0" cy="14.0" r="0.8" fill="#a8ffe4" opacity="0.13"/><circle cx="108.0" cy="14.0" r="0.8" fill="#a8ffe4" opacity="0.12"/><circle cx="112.0" cy="14.0" r="0.8" fill="#a8ffe4" opacity="0.11"/><circle cx="116.0" cy="14.0" r="0.8" fill="#a8ffe4" opacity="0.10"/><circle cx="60.0" cy="18.0" r="0.8" fill="#a8ffe4" opacity="0.12"/><circle cx="64.0" cy="18.0" r="0.8" fill="#a8ffe4" opacity="0.12"/><circle cx="68.0" cy="18.0" r="0.8" fill="#a8ffe4" opacity="0.13"/><circle cx="80.0" cy="18.0" r="0.8" fill="#a8ffe4" opacity="0.14"/><circle cx="84.0" cy="18.0" r="0.8" fill="#a8ffe4" opacity="0.14"/><circle cx="88.0" cy="18.0" r="0.8" fill="#a8ffe4" opacity="0.14"/><circle cx="92.0" cy="18.0" r="0.8" fill="#a8ffe4" opacity="0.14"/><circle cx="100.0" cy="18.0" r="0.8" fill="#a8ffe4" opacity="0.13"/><circle cx="124.0" cy="18.0" r="0.8" fill="#a8ffe4" opacity="0.09"/><circle cx="48.0" cy="22.0" r="0.8" fill="#a8ffe4" opacity="0.10"/><circle cx="52.0" cy="22.0" r="0.8" fill="#a8ffe4" opacity="0.11"/><circle cx="60.0" cy="22.0" r="0.8" fill="#a8ffe4" opacity="0.12"/><circle cx="64.0" cy="22.0" r="0.8" fill="#a8ffe4" opacity="0.13"/><circle cx="68.0" cy="22.0" r="0.8" fill="#a8ffe4" opacity="0.13"/><circle cx="72.0" cy="22.0" r="0.8" fill="#a8ffe4" opacity="0.14"/><circle cx="76.0" cy="22.0" r="0.8" fill="#a8ffe4" opacity="0.14"/><circle cx="80.0" cy="22.0" r="0.8" fill="#a8ffe4" opacity="0.14"/><circle cx="84.0" cy="22.0" r="0.8" fill="#a8ffe4" opacity="0.14"/><circle cx="88.0" cy="22.0" r="0.8" fill="#a8ffe4" opacity="0.14"/><circle cx="104.0" cy="22.0" r="0.8" fill="#a8ffe4" opacity="0.13"/><circle cx="108.0" cy="22.0" r="0.8" fill="#a8ffe4" opacity="0.13"/><circle cx="112.0" cy="22.0" r="0.8" fill="#a8ffe4" opacity="0.12"/><circle cx="116.0" cy="22.0" r="0.8" fill="#a8ffe4" opacity="0.11"/><circle cx="124.0" cy="22.0" r="0.8" fill="#a8ffe4" opacity="0.09"/><circle cx="44.0" cy="26.0" r="0.8" fill="#a8ffe4" opacity="0.09"/><circle cx="48.0" cy="26.0" r="0.8" fill="#a8ffe4" opacity="0.10"/><circle cx="52.0" cy="26.0" r="0.8" fill="#a8ffe4" opacity="0.11"/><circle cx="56.0" cy="26.0" r="0.8" fill="#a8ffe4" opacity="0.12"/><circle cx="68.0" cy="26.0" r="0.8" fill="#a8ffe4" opacity="0.14"/><circle cx="72.0" cy="26.0" r="0.8" fill="#a8ffe4" opacity="0.14"/><circle cx="80.0" cy="26.0" r="0.8" fill="#a8ffe4" opacity="0.15"/><circle cx="84.0" cy="26.0" r="0.8" fill="#a8ffe4" opacity="0.15"/><circle cx="88.0" cy="26.0" r="0.8" fill="#a8ffe4" opacity="0.15"/><circle cx="92.0" cy="26.0" r="0.8" fill="#a8ffe4" opacity="0.15"/><circle cx="96.0" cy="26.0" r="0.8" fill="#a8ffe4" opacity="0.14"/><circle cx="100.0" cy="26.0" r="0.8" fill="#a8ffe4" opacity="0.14"/><circle cx="104.0" cy="26.0" r="0.8" fill="#a8ffe4" opacity="0.13"/><circle cx="108.0" cy="26.0" r="0.8" fill="#a8ffe4" opacity="0.13"/><circle cx="116.0" cy="26.0" r="0.8" fill="#a8ffe4" opacity="0.11"/><circle cx="120.0" cy="26.0" r="0.8" fill="#a8ffe4" opacity="0.11"/><circle cx="124.0" cy="26.0" r="0.8" fill="#a8ffe4" opacity="0.10"/><circle cx="44.0" cy="30.0" r="0.8" fill="#a8ffe4" opacity="0.10"/><circle cx="48.0" cy="30.0" r="0.8" fill="#a8ffe4" opacity="0.11"/><circle cx="56.0" cy="30.0" r="0.8" fill="#a8ffe4" opacity="0.13"/><circle cx="64.0" cy="30.0" r="0.8" fill="#a8ffe4" opacity="0.14"/><circle cx="68.0" cy="30.0" r="0.8" fill="#a8ffe4" opacity="0.14"/><circle cx="72.0" cy="30.0" r="0.8" fill="#a8ffe4" opacity="0.15"/><circle cx="76.0" cy="30.0" r="0.8" fill="#a8ffe4" opacity="0.15"/><circle cx="84.0" cy="30.0" r="0.8" fill="#a8ffe4" opacity="0.15"/><circle cx="88.0" cy="30.0" r="0.8" fill="#a8ffe4" opacity="0.15"/><circle cx="92.0" cy="30.0" r="0.8" fill="#a8ffe4" opacity="0.15"/><circle cx="96.0" cy="30.0" r="0.8" fill="#a8ffe4" opacity="0.15"/><circle cx="104.0" cy="30.0" r="0.8" fill="#a8ffe4" opacity="0.14"/><circle cx="112.0" cy="30.0" r="0.8" fill="#a8ffe4" opacity="0.12"/><circle cx="120.0" cy="30.0" r="0.8" fill="#a8ffe4" opacity="0.11"/><circle cx="124.0" cy="30.0" r="0.8" fill="#a8ffe4" opacity="0.10"/><circle cx="48.0" cy="34.0" r="0.8" fill="#a8ffe4" opacity="0.11"/><circle cx="52.0" cy="34.0" r="0.8" fill="#a8ffe4" opacity="0.12"/><circle cx="56.0" cy="34.0" r="0.8" fill="#a8ffe4" opacity="0.13"/><circle cx="60.0" cy="34.0" r="0.8" fill="#a8ffe4" opacity="0.14"/><circle cx="64.0" cy="34.0" r="0.8" fill="#a8ffe4" opacity="0.14"/><circle cx="68.0" cy="34.0" r="0.8" fill="#a8ffe4" opacity="0.15"/><circle cx="72.0" cy="34.0" r="0.8" fill="#a8ffe4" opacity="0.15"/><circle cx="76.0" cy="34.0" r="0.8" fill="#a8ffe4" opacity="0.15"/><circle cx="80.0" cy="34.0" r="0.8" fill="#a8ffe4" opacity="0.15"/><circle cx="84.0" cy="34.0" r="0.8" fill="#a8ffe4" opacity="0.15"/><circle cx="88.0" cy="34.0" r="0.8" fill="#a8ffe4" opacity="0.15"/><circle cx="92.0" cy="34.0" r="0.8" fill="#a8ffe4" opacity="0.15"/><circle cx="96.0" cy="34.0" r="0.8" fill="#a8ffe4" opacity="0.15"/><circle cx="100.0" cy="34.0" r="0.8" fill="#a8ffe4" opacity="0.14"/><circle cx="104.0" cy="34.0" r="0.8" fill="#a8ffe4" opacity="0.14"/><circle cx="108.0" cy="34.0" r="0.8" fill="#a8ffe4" opacity="0.13"/><circle cx="112.0" cy="34.0" r="0.8" fill="#a8ffe4" opacity="0.13"/><circle cx="120.0" cy="34.0" r="0.8" fill="#a8ffe4" opacity="0.11"/><circle cx="124.0" cy="34.0" r="0.8" fill="#a8ffe4" opacity="0.10"/><circle cx="40.0" cy="38.0" r="0.8" fill="#a8ffe4" opacity="0.10"/><circle cx="44.0" cy="38.0" r="0.8" fill="#a8ffe4" opacity="0.11"/><circle cx="48.0" cy="38.0" r="0.8" fill="#a8ffe4" opacity="0.12"/><circle cx="52.0" cy="38.0" r="0.8" fill="#a8ffe4" opacity="0.13"/><circle cx="56.0" cy="38.0" r="0.8" fill="#a8ffe4" opacity="0.13"/><circle cx="60.0" cy="38.0" r="0.8" fill="#a8ffe4" opacity="0.14"/><circle cx="64.0" cy="38.0" r="0.8" fill="#a8ffe4" opacity="0.15"/><circle cx="68.0" cy="38.0" r="0.8" fill="#a8ffe4" opacity="0.15"/><circle cx="72.0" cy="38.0" r="0.8" fill="#a8ffe4" opacity="0.15"/><circle cx="76.0" cy="38.0" r="0.8" fill="#a8ffe4" opacity="0.16"/><circle cx="84.0" cy="38.0" r="0.8" fill="#a8ffe4" opacity="0.16"/><circle cx="88.0" cy="38.0" r="0.8" fill="#a8ffe4" opacity="0.16"/><circle cx="92.0" cy="38.0" r="0.8" fill="#a8ffe4" opacity="0.15"/><circle cx="96.0" cy="38.0" r="0.8" fill="#a8ffe4" opacity="0.15"/><circle cx="108.0" cy="38.0" r="0.8" fill="#a8ffe4" opacity="0.14"/><circle cx="112.0" cy="38.0" r="0.8" fill="#a8ffe4" opacity="0.13"/><circle cx="120.0" cy="38.0" r="0.8" fill="#a8ffe4" opacity="0.11"/><circle cx="124.0" cy="38.0" r="0.8" fill="#a8ffe4" opacity="0.10"/><circle cx="36.0" cy="42.0" r="0.8" fill="#a8ffe4" opacity="0.09"/><circle cx="44.0" cy="42.0" r="0.8" fill="#a8ffe4" opacity="0.11"/><circle cx="52.0" cy="42.0" r="0.8" fill="#a8ffe4" opacity="0.13"/><circle cx="56.0" cy="42.0" r="0.8" fill="#a8ffe4" opacity="0.14"/><circle cx="60.0" cy="42.0" r="0.8" fill="#a8ffe4" opacity="0.14"/><circle cx="64.0" cy="42.0" r="0.8" fill="#a8ffe4" opacity="0.15"/><circle cx="68.0" cy="42.0" r="0.8" fill="#a8ffe4" opacity="0.15"/><circle cx="76.0" cy="42.0" r="0.8" fill="#a8ffe4" opacity="0.16"/><circle cx="80.0" cy="42.0" r="0.8" fill="#a8ffe4" opacity="0.16"/><circle cx="84.0" cy="42.0" r="0.8" fill="#a8ffe4" opacity="0.16"/><circle cx="88.0" cy="42.0" r="0.8" fill="#a8ffe4" opacity="0.16"/><circle cx="92.0" cy="42.0" r="0.8" fill="#a8ffe4" opacity="0.15"/><circle cx="96.0" cy="42.0" r="0.8" fill="#a8ffe4" opacity="0.15"/><circle cx="100.0" cy="42.0" r="0.8" fill="#a8ffe4" opacity="0.15"/><circle cx="108.0" cy="42.0" r="0.8" fill="#a8ffe4" opacity="0.14"/><circle cx="112.0" cy="42.0" r="0.8" fill="#a8ffe4" opacity="0.13"/><circle cx="124.0" cy="42.0" r="0.8" fill="#a8ffe4" opacity="0.10"/><circle cx="36.0" cy="46.0" r="0.8" fill="#a8ffe4" opacity="0.09"/><circle cx="48.0" cy="46.0" r="0.8" fill="#a8ffe4" opacity="0.12"/><circle cx="52.0" cy="46.0" r="0.8" fill="#a8ffe4" opacity="0.13"/><circle cx="60.0" cy="46.0" r="0.8" fill="#a8ffe4" opacity="0.15"/><circle cx="68.0" cy="46.0" r="0.8" fill="#a8ffe4" opacity="0.15"/><circle cx="72.0" cy="46.0" r="0.8" fill="#a8ffe4" opacity="0.16"/><circle cx="76.0" cy="46.0" r="0.8" fill="#a8ffe4" opacity="0.16"/><circle cx="80.0" cy="46.0" r="0.8" fill="#a8ffe4" opacity="0.16"/><circle cx="84.0" cy="46.0" r="0.8" fill="#a8ffe4" opacity="0.16"/><circle cx="88.0" cy="46.0" r="0.8" fill="#a8ffe4" opacity="0.16"/><circle cx="92.0" cy="46.0" r="0.8" fill="#a8ffe4" opacity="0.16"/><circle cx="96.0" cy="46.0" r="0.8" fill="#a8ffe4" opacity="0.15"/><circle cx="100.0" cy="46.0" r="0.8" fill="#a8ffe4" opacity="0.15"/><circle cx="104.0" cy="46.0" r="0.8" fill="#a8ffe4" opacity="0.14"/><circle cx="108.0" cy="46.0" r="0.8" fill="#a8ffe4" opacity="0.14"/><circle cx="112.0" cy="46.0" r="0.8" fill="#a8ffe4" opacity="0.13"/><circle cx="116.0" cy="46.0" r="0.8" fill="#a8ffe4" opacity="0.12"/><circle cx="120.0" cy="46.0" r="0.8" fill="#a8ffe4" opacity="0.11"/><circle cx="124.0" cy="46.0" r="0.8" fill="#a8ffe4" opacity="0.10"/><circle cx="44.0" cy="50.0" r="0.8" fill="#a8ffe4" opacity="0.12"/><circle cx="48.0" cy="50.0" r="0.8" fill="#a8ffe4" opacity="0.13"/><circle cx="52.0" cy="50.0" r="0.8" fill="#a8ffe4" opacity="0.13"/><circle cx="56.0" cy="50.0" r="0.8" fill="#a8ffe4" opacity="0.14"/><circle cx="64.0" cy="50.0" r="0.8" fill="#a8ffe4" opacity="0.15"/><circle cx="68.0" cy="50.0" r="0.8" fill="#a8ffe4" opacity="0.16"/><circle cx="72.0" cy="50.0" r="0.8" fill="#a8ffe4" opacity="0.16"/><circle cx="76.0" cy="50.0" r="0.8" fill="#a8ffe4" opacity="0.16"/><circle cx="80.0" cy="50.0" r="0.8" fill="#a8ffe4" opacity="0.16"/><circle cx="84.0" cy="50.0" r="0.8" fill="#a8ffe4" opacity="0.16"/><circle cx="88.0" cy="50.0" r="0.8" fill="#a8ffe4" opacity="0.16"/><circle cx="92.0" cy="50.0" r="0.8" fill="#a8ffe4" opacity="0.16"/><circle cx="96.0" cy="50.0" r="0.8" fill="#a8ffe4" opacity="0.15"/><circle cx="100.0" cy="50.0" r="0.8" fill="#a8ffe4" opacity="0.15"/><circle cx="104.0" cy="50.0" r="0.8" fill="#a8ffe4" opacity="0.14"/><circle cx="108.0" cy="50.0" r="0.8" fill="#a8ffe4" opacity="0.13"/><circle cx="112.0" cy="50.0" r="0.8" fill="#a8ffe4" opacity="0.13"/><circle cx="116.0" cy="50.0" r="0.8" fill="#a8ffe4" opacity="0.12"/><circle cx="120.0" cy="50.0" r="0.8" fill="#a8ffe4" opacity="0.11"/><circle cx="40.0" cy="54.0" r="0.8" fill="#a8ffe4" opacity="0.11"/><circle cx="44.0" cy="54.0" r="0.8" fill="#a8ffe4" opacity="0.12"/><circle cx="48.0" cy="54.0" r="0.8" fill="#a8ffe4" opacity="0.13"/><circle cx="52.0" cy="54.0" r="0.8" fill="#a8ffe4" opacity="0.14"/><circle cx="56.0" cy="54.0" r="0.8" fill="#a8ffe4" opacity="0.14"/><circle cx="60.0" cy="54.0" r="0.8" fill="#a8ffe4" opacity="0.15"/><circle cx="64.0" cy="54.0" r="0.8" fill="#a8ffe4" opacity="0.15"/><circle cx="68.0" cy="54.0" r="0.8" fill="#a8ffe4" opacity="0.16"/><circle cx="72.0" cy="54.0" r="0.8" fill="#a8ffe4" opacity="0.16"/><circle cx="76.0" cy="54.0" r="0.8" fill="#a8ffe4" opacity="0.16"/><circle cx="80.0" cy="54.0" r="0.8" fill="#a8ffe4" opacity="0.16"/><circle cx="84.0" cy="54.0" r="0.8" fill="#a8ffe4" opacity="0.16"/><circle cx="88.0" cy="54.0" r="0.8" fill="#a8ffe4" opacity="0.16"/><circle cx="92.0" cy="54.0" r="0.8" fill="#a8ffe4" opacity="0.15"/><circle cx="96.0" cy="54.0" r="0.8" fill="#a8ffe4" opacity="0.15"/><circle cx="100.0" cy="54.0" r="0.8" fill="#a8ffe4" opacity="0.15"/><circle cx="104.0" cy="54.0" r="0.8" fill="#a8ffe4" opacity="0.14"/><circle cx="108.0" cy="54.0" r="0.8" fill="#a8ffe4" opacity="0.13"/><circle cx="116.0" cy="54.0" r="0.8" fill="#a8ffe4" opacity="0.12"/><circle cx="44.0" cy="58.0" r="0.8" fill="#a8ffe4" opacity="0.12"/><circle cx="52.0" cy="58.0" r="0.8" fill="#a8ffe4" opacity="0.14"/><circle cx="64.0" cy="58.0" r="0.8" fill="#a8ffe4" opacity="0.15"/><circle cx="68.0" cy="58.0" r="0.8" fill="#a8ffe4" opacity="0.15"/><circle cx="76.0" cy="58.0" r="0.8" fill="#a8ffe4" opacity="0.16"/><circle cx="80.0" cy="58.0" r="0.8" fill="#a8ffe4" opacity="0.16"/><circle cx="84.0" cy="58.0" r="0.8" fill="#a8ffe4" opacity="0.16"/><circle cx="88.0" cy="58.0" r="0.8" fill="#a8ffe4" opacity="0.16"/><circle cx="96.0" cy="58.0" r="0.8" fill="#a8ffe4" opacity="0.15"/><circle cx="100.0" cy="58.0" r="0.8" fill="#a8ffe4" opacity="0.14"/><circle cx="104.0" cy="58.0" r="0.8" fill="#a8ffe4" opacity="0.14"/><circle cx="108.0" cy="58.0" r="0.8" fill="#a8ffe4" opacity="0.13"/><circle cx="116.0" cy="58.0" r="0.8" fill="#a8ffe4" opacity="0.11"/><circle cx="120.0" cy="58.0" r="0.8" fill="#a8ffe4" opacity="0.10"/><circle cx="32.0" cy="62.0" r="0.8" fill="#a8ffe4" opacity="0.09"/><circle cx="36.0" cy="62.0" r="0.8" fill="#a8ffe4" opacity="0.10"/><circle cx="40.0" cy="62.0" r="0.8" fill="#a8ffe4" opacity="0.11"/><circle cx="44.0" cy="62.0" r="0.8" fill="#a8ffe4" opacity="0.12"/><circle cx="52.0" cy="62.0" r="0.8" fill="#a8ffe4" opacity="0.14"/><circle cx="60.0" cy="62.0" r="0.8" fill="#a8ffe4" opacity="0.15"/><circle cx="64.0" cy="62.0" r="0.8" fill="#a8ffe4" opacity="0.15"/><circle cx="68.0" cy="62.0" r="0.8" fill="#a8ffe4" opacity="0.15"/><circle cx="72.0" cy="62.0" r="0.8" fill="#a8ffe4" opacity="0.16"/><circle cx="76.0" cy="62.0" r="0.8" fill="#a8ffe4" opacity="0.16"/><circle cx="80.0" cy="62.0" r="0.8" fill="#a8ffe4" opacity="0.16"/><circle cx="84.0" cy="62.0" r="0.8" fill="#a8ffe4" opacity="0.16"/><circle cx="88.0" cy="62.0" r="0.8" fill="#a8ffe4" opacity="0.15"/><circle cx="92.0" cy="62.0" r="0.8" fill="#a8ffe4" opacity="0.15"/><circle cx="100.0" cy="62.0" r="0.8" fill="#a8ffe4" opacity="0.14"/><circle cx="108.0" cy="62.0" r="0.8" fill="#a8ffe4" opacity="0.13"/><circle cx="112.0" cy="62.0" r="0.8" fill="#a8ffe4" opacity="0.12"/><circle cx="120.0" cy="62.0" r="0.8" fill="#a8ffe4" opacity="0.10"/><circle cx="40.0" cy="66.0" r="0.8" fill="#a8ffe4" opacity="0.11"/><circle cx="44.0" cy="66.0" r="0.8" fill="#a8ffe4" opacity="0.12"/><circle cx="52.0" cy="66.0" r="0.8" fill="#a8ffe4" opacity="0.13"/><circle cx="56.0" cy="66.0" r="0.8" fill="#a8ffe4" opacity="0.14"/><circle cx="60.0" cy="66.0" r="0.8" fill="#a8ffe4" opacity="0.14"/><circle cx="64.0" cy="66.0" r="0.8" fill="#a8ffe4" opacity="0.15"/><circle cx="68.0" cy="66.0" r="0.8" fill="#a8ffe4" opacity="0.15"/><circle cx="72.0" cy="66.0" r="0.8" fill="#a8ffe4" opacity="0.15"/><circle cx="76.0" cy="66.0" r="0.8" fill="#a8ffe4" opacity="0.15"/><circle cx="84.0" cy="66.0" r="0.8" fill="#a8ffe4" opacity="0.15"/><circle cx="88.0" cy="66.0" r="0.8" fill="#a8ffe4" opacity="0.15"/><circle cx="92.0" cy="66.0" r="0.8" fill="#a8ffe4" opacity="0.15"/><circle cx="96.0" cy="66.0" r="0.8" fill="#a8ffe4" opacity="0.14"/><circle cx="100.0" cy="66.0" r="0.8" fill="#a8ffe4" opacity="0.14"/><circle cx="104.0" cy="66.0" r="0.8" fill="#a8ffe4" opacity="0.13"/><circle cx="108.0" cy="66.0" r="0.8" fill="#a8ffe4" opacity="0.12"/><circle cx="112.0" cy="66.0" r="0.8" fill="#a8ffe4" opacity="0.11"/><circle cx="116.0" cy="66.0" r="0.8" fill="#a8ffe4" opacity="0.10"/><circle cx="36.0" cy="70.0" r="0.8" fill="#a8ffe4" opacity="0.10"/><circle cx="40.0" cy="70.0" r="0.8" fill="#a8ffe4" opacity="0.11"/><circle cx="48.0" cy="70.0" r="0.8" fill="#a8ffe4" opacity="0.12"/><circle cx="52.0" cy="70.0" r="0.8" fill="#a8ffe4" opacity="0.13"/><circle cx="56.0" cy="70.0" r="0.8" fill="#a8ffe4" opacity="0.14"/><circle cx="60.0" cy="70.0" r="0.8" fill="#a8ffe4" opacity="0.14"/><circle cx="64.0" cy="70.0" r="0.8" fill="#a8ffe4" opacity="0.15"/><circle cx="68.0" cy="70.0" r="0.8" fill="#a8ffe4" opacity="0.15"/><circle cx="72.0" cy="70.0" r="0.8" fill="#a8ffe4" opacity="0.15"/><circle cx="76.0" cy="70.0" r="0.8" fill="#a8ffe4" opacity="0.15"/><circle cx="80.0" cy="70.0" r="0.8" fill="#a8ffe4" opacity="0.15"/><circle cx="84.0" cy="70.0" r="0.8" fill="#a8ffe4" opacity="0.15"/><circle cx="88.0" cy="70.0" r="0.8" fill="#a8ffe4" opacity="0.15"/><circle cx="92.0" cy="70.0" r="0.8" fill="#a8ffe4" opacity="0.14"/><circle cx="100.0" cy="70.0" r="0.8" fill="#a8ffe4" opacity="0.13"/><circle cx="104.0" cy="70.0" r="0.8" fill="#a8ffe4" opacity="0.13"/><circle cx="108.0" cy="70.0" r="0.8" fill="#a8ffe4" opacity="0.12"/><circle cx="36.0" cy="74.0" r="0.8" fill="#a8ffe4" opacity="0.10"/><circle cx="40.0" cy="74.0" r="0.8" fill="#a8ffe4" opacity="0.11"/><circle cx="44.0" cy="74.0" r="0.8" fill="#a8ffe4" opacity="0.11"/><circle cx="48.0" cy="74.0" r="0.8" fill="#a8ffe4" opacity="0.12"/><circle cx="52.0" cy="74.0" r="0.8" fill="#a8ffe4" opacity="0.13"/><circle cx="56.0" cy="74.0" r="0.8" fill="#a8ffe4" opacity="0.13"/><circle cx="60.0" cy="74.0" r="0.8" fill="#a8ffe4" opacity="0.14"/><circle cx="64.0" cy="74.0" r="0.8" fill="#a8ffe4" opacity="0.14"/><circle cx="72.0" cy="74.0" r="0.8" fill="#a8ffe4" opacity="0.15"/><circle cx="76.0" cy="74.0" r="0.8" fill="#a8ffe4" opacity="0.15"/><circle cx="84.0" cy="74.0" r="0.8" fill="#a8ffe4" opacity="0.15"/><circle cx="88.0" cy="74.0" r="0.8" fill="#a8ffe4" opacity="0.14"/><circle cx="92.0" cy="74.0" r="0.8" fill="#a8ffe4" opacity="0.14"/><circle cx="96.0" cy="74.0" r="0.8" fill="#a8ffe4" opacity="0.13"/><circle cx="100.0" cy="74.0" r="0.8" fill="#a8ffe4" opacity="0.13"/><circle cx="108.0" cy="74.0" r="0.8" fill="#a8ffe4" opacity="0.11"/><circle cx="112.0" cy="74.0" r="0.8" fill="#a8ffe4" opacity="0.10"/><circle cx="36.0" cy="78.0" r="0.8" fill="#a8ffe4" opacity="0.09"/><circle cx="40.0" cy="78.0" r="0.8" fill="#a8ffe4" opacity="0.10"/><circle cx="44.0" cy="78.0" r="0.8" fill="#a8ffe4" opacity="0.11"/><circle cx="48.0" cy="78.0" r="0.8" fill="#a8ffe4" opacity="0.12"/><circle cx="52.0" cy="78.0" r="0.8" fill="#a8ffe4" opacity="0.13"/><circle cx="60.0" cy="78.0" r="0.8" fill="#a8ffe4" opacity="0.14"/><circle cx="64.0" cy="78.0" r="0.8" fill="#a8ffe4" opacity="0.14"/><circle cx="68.0" cy="78.0" r="0.8" fill="#a8ffe4" opacity="0.14"/><circle cx="72.0" cy="78.0" r="0.8" fill="#a8ffe4" opacity="0.14"/><circle cx="80.0" cy="78.0" r="0.8" fill="#a8ffe4" opacity="0.14"/><circle cx="84.0" cy="78.0" r="0.8" fill="#a8ffe4" opacity="0.14"/><circle cx="88.0" cy="78.0" r="0.8" fill="#a8ffe4" opacity="0.14"/><circle cx="100.0" cy="78.0" r="0.8" fill="#a8ffe4" opacity="0.12"/><circle cx="108.0" cy="78.0" r="0.8" fill="#a8ffe4" opacity="0.11"/><circle cx="112.0" cy="78.0" r="0.8" fill="#a8ffe4" opacity="0.10"/><circle cx="36.0" cy="82.0" r="0.8" fill="#a8ffe4" opacity="0.09"/><circle cx="40.0" cy="82.0" r="0.8" fill="#a8ffe4" opacity="0.10"/><circle cx="44.0" cy="82.0" r="0.8" fill="#a8ffe4" opacity="0.11"/><circle cx="48.0" cy="82.0" r="0.8" fill="#a8ffe4" opacity="0.12"/><circle cx="56.0" cy="82.0" r="0.8" fill="#a8ffe4" opacity="0.13"/><circle cx="64.0" cy="82.0" r="0.8" fill="#a8ffe4" opacity="0.13"/><circle cx="68.0" cy="82.0" r="0.8" fill="#a8ffe4" opacity="0.14"/><circle cx="72.0" cy="82.0" r="0.8" fill="#a8ffe4" opacity="0.14"/><circle cx="76.0" cy="82.0" r="0.8" fill="#a8ffe4" opacity="0.14"/><circle cx="84.0" cy="82.0" r="0.8" fill="#a8ffe4" opacity="0.13"/><circle cx="88.0" cy="82.0" r="0.8" fill="#a8ffe4" opacity="0.13"/><circle cx="92.0" cy="82.0" r="0.8" fill="#a8ffe4" opacity="0.13"/><circle cx="100.0" cy="82.0" r="0.8" fill="#a8ffe4" opacity="0.12"/><circle cx="108.0" cy="82.0" r="0.8" fill="#a8ffe4" opacity="0.10"/><circle cx="112.0" cy="82.0" r="0.8" fill="#a8ffe4" opacity="0.09"/><circle cx="40.0" cy="86.0" r="0.8" fill="#a8ffe4" opacity="0.10"/><circle cx="56.0" cy="86.0" r="0.8" fill="#a8ffe4" opacity="0.12"/><circle cx="64.0" cy="86.0" r="0.8" fill="#a8ffe4" opacity="0.13"/><circle cx="68.0" cy="86.0" r="0.8" fill="#a8ffe4" opacity="0.13"/><circle cx="76.0" cy="86.0" r="0.8" fill="#a8ffe4" opacity="0.13"/><circle cx="80.0" cy="86.0" r="0.8" fill="#a8ffe4" opacity="0.13"/><circle cx="84.0" cy="86.0" r="0.8" fill="#a8ffe4" opacity="0.13"/><circle cx="92.0" cy="86.0" r="0.8" fill="#a8ffe4" opacity="0.12"/><circle cx="108.0" cy="86.0" r="0.8" fill="#a8ffe4" opacity="0.09"/><circle cx="48.0" cy="90.0" r="0.8" fill="#a8ffe4" opacity="0.11"/><circle cx="52.0" cy="90.0" r="0.8" fill="#a8ffe4" opacity="0.11"/><circle cx="56.0" cy="90.0" r="0.8" fill="#a8ffe4" opacity="0.12"/><circle cx="60.0" cy="90.0" r="0.8" fill="#a8ffe4" opacity="0.12"/><circle cx="68.0" cy="90.0" r="0.8" fill="#a8ffe4" opacity="0.12"/><circle cx="72.0" cy="90.0" r="0.8" fill="#a8ffe4" opacity="0.13"/><circle cx="76.0" cy="90.0" r="0.8" fill="#a8ffe4" opacity="0.12"/><circle cx="84.0" cy="90.0" r="0.8" fill="#a8ffe4" opacity="0.12"/><circle cx="88.0" cy="90.0" r="0.8" fill="#a8ffe4" opacity="0.12"/><circle cx="92.0" cy="90.0" r="0.8" fill="#a8ffe4" opacity="0.11"/><circle cx="96.0" cy="90.0" r="0.8" fill="#a8ffe4" opacity="0.11"/><circle cx="52.0" cy="94.0" r="0.8" fill="#a8ffe4" opacity="0.10"/><circle cx="56.0" cy="94.0" r="0.8" fill="#a8ffe4" opacity="0.11"/><circle cx="60.0" cy="94.0" r="0.8" fill="#a8ffe4" opacity="0.11"/><circle cx="76.0" cy="94.0" r="0.8" fill="#a8ffe4" opacity="0.12"/><circle cx="92.0" cy="94.0" r="0.8" fill="#a8ffe4" opacity="0.10"/><circle cx="96.0" cy="94.0" r="0.8" fill="#a8ffe4" opacity="0.10"/><circle cx="100.0" cy="94.0" r="0.8" fill="#a8ffe4" opacity="0.09"/><circle cx="48.0" cy="98.0" r="0.8" fill="#a8ffe4" opacity="0.09"/><circle cx="72.0" cy="98.0" r="0.8" fill="#a8ffe4" opacity="0.11"/><circle cx="76.0" cy="98.0" r="0.8" fill="#a8ffe4" opacity="0.11"/><circle cx="80.0" cy="98.0" r="0.8" fill="#a8ffe4" opacity="0.11"/><circle cx="88.0" cy="98.0" r="0.8" fill="#a8ffe4" opacity="0.10"/><circle cx="92.0" cy="98.0" r="0.8" fill="#a8ffe4" opacity="0.10"/><circle cx="96.0" cy="98.0" r="0.8" fill="#a8ffe4" opacity="0.09"/><circle cx="52.0" cy="102.0" r="0.8" fill="#a8ffe4" opacity="0.09"/><circle cx="56.0" cy="102.0" r="0.8" fill="#a8ffe4" opacity="0.09"/><circle cx="60.0" cy="102.0" r="0.8" fill="#a8ffe4" opacity="0.10"/><circle cx="68.0" cy="102.0" r="0.8" fill="#a8ffe4" opacity="0.10"/><circle cx="72.0" cy="102.0" r="0.8" fill="#a8ffe4" opacity="0.10"/><circle cx="80.0" cy="102.0" r="0.8" fill="#a8ffe4" opacity="0.10"/><circle cx="60.0" cy="106.0" r="0.8" fill="#a8ffe4" opacity="0.09"/><circle cx="64.0" cy="106.0" r="0.8" fill="#a8ffe4" opacity="0.09"/><circle cx="68.0" cy="106.0" r="0.8" fill="#a8ffe4" opacity="0.09"/><circle cx="76.0" cy="106.0" r="0.8" fill="#a8ffe4" opacity="0.09"/><circle cx="220.0" cy="145.0" r="1.1" fill="#a8ffe4" opacity="0.10"/><circle cx="230.0" cy="145.0" r="1.1" fill="#a8ffe4" opacity="0.11"/><circle cx="240.0" cy="145.0" r="1.1" fill="#a8ffe4" opacity="0.11"/><circle cx="245.0" cy="145.0" r="1.1" fill="#a8ffe4" opacity="0.11"/><circle cx="250.0" cy="145.0" r="1.1" fill="#a8ffe4" opacity="0.11"/><circle cx="265.0" cy="145.0" r="1.1" fill="#a8ffe4" opacity="0.10"/><circle cx="170.0" cy="150.0" r="1.1" fill="#a8ffe4" opacity="0.11"/><circle cx="175.0" cy="150.0" r="1.1" fill="#a8ffe4" opacity="0.11"/><circle cx="185.0" cy="150.0" r="1.1" fill="#a8ffe4" opacity="0.13"/><circle cx="190.0" cy="150.0" r="1.1" fill="#a8ffe4" opacity="0.13"/><circle cx="195.0" cy="150.0" r="1.1" fill="#a8ffe4" opacity="0.14"/><circle cx="205.0" cy="150.0" r="1.1" fill="#a8ffe4" opacity="0.14"/><circle cx="215.0" cy="150.0" r="1.1" fill="#a8ffe4" opacity="0.15"/><circle cx="220.0" cy="150.0" r="1.1" fill="#a8ffe4" opacity="0.15"/><circle cx="225.0" cy="150.0" r="1.1" fill="#a8ffe4" opacity="0.15"/><circle cx="230.0" cy="150.0" r="1.1" fill="#a8ffe4" opacity="0.15"/><circle cx="235.0" cy="150.0" r="1.1" fill="#a8ffe4" opacity="0.15"/><circle cx="240.0" cy="150.0" r="1.1" fill="#a8ffe4" opacity="0.15"/><circle cx="245.0" cy="150.0" r="1.1" fill="#a8ffe4" opacity="0.14"/><circle cx="265.0" cy="150.0" r="1.1" fill="#a8ffe4" opacity="0.13"/><circle cx="270.0" cy="150.0" r="1.1" fill="#a8ffe4" opacity="0.12"/><circle cx="275.0" cy="150.0" r="1.1" fill="#a8ffe4" opacity="0.12"/><circle cx="280.0" cy="150.0" r="1.1" fill="#a8ffe4" opacity="0.11"/><circle cx="140.0" cy="155.0" r="1.1" fill="#a8ffe4" opacity="0.10"/><circle cx="150.0" cy="155.0" r="1.1" fill="#a8ffe4" opacity="0.12"/><circle cx="155.0" cy="155.0" r="1.1" fill="#a8ffe4" opacity="0.13"/><circle cx="160.0" cy="155.0" r="1.1" fill="#a8ffe4" opacity="0.13"/><circle cx="170.0" cy="155.0" r="1.1" fill="#a8ffe4" opacity="0.15"/><circle cx="175.0" cy="155.0" r="1.1" fill="#a8ffe4" opacity="0.15"/><circle cx="185.0" cy="155.0" r="1.1" fill="#a8ffe4" opacity="0.16"/><circle cx="190.0" cy="155.0" r="1.1" fill="#a8ffe4" opacity="0.16"/><circle cx="195.0" cy="155.0" r="1.1" fill="#a8ffe4" opacity="0.17"/><circle cx="200.0" cy="155.0" r="1.1" fill="#a8ffe4" opacity="0.17"/><circle cx="205.0" cy="155.0" r="1.1" fill="#a8ffe4" opacity="0.17"/><circle cx="210.0" cy="155.0" r="1.1" fill="#a8ffe4" opacity="0.17"/><circle cx="215.0" cy="155.0" r="1.1" fill="#a8ffe4" opacity="0.17"/><circle cx="220.0" cy="155.0" r="1.1" fill="#a8ffe4" opacity="0.17"/><circle cx="225.0" cy="155.0" r="1.1" fill="#a8ffe4" opacity="0.17"/><circle cx="230.0" cy="155.0" r="1.1" fill="#a8ffe4" opacity="0.17"/><circle cx="235.0" cy="155.0" r="1.1" fill="#a8ffe4" opacity="0.17"/><circle cx="240.0" cy="155.0" r="1.1" fill="#a8ffe4" opacity="0.16"/><circle cx="245.0" cy="155.0" r="1.1" fill="#a8ffe4" opacity="0.16"/><circle cx="250.0" cy="155.0" r="1.1" fill="#a8ffe4" opacity="0.15"/><circle cx="260.0" cy="155.0" r="1.1" fill="#a8ffe4" opacity="0.14"/><circle cx="265.0" cy="155.0" r="1.1" fill="#a8ffe4" opacity="0.14"/><circle cx="270.0" cy="155.0" r="1.1" fill="#a8ffe4" opacity="0.13"/><circle cx="280.0" cy="155.0" r="1.1" fill="#a8ffe4" opacity="0.11"/><circle cx="285.0" cy="155.0" r="1.1" fill="#a8ffe4" opacity="0.11"/><circle cx="125.0" cy="160.0" r="1.1" fill="#a8ffe4" opacity="0.11"/><circle cx="140.0" cy="160.0" r="1.1" fill="#a8ffe4" opacity="0.13"/><circle cx="145.0" cy="160.0" r="1.1" fill="#a8ffe4" opacity="0.14"/><circle cx="150.0" cy="160.0" r="1.1" fill="#a8ffe4" opacity="0.15"/><circle cx="155.0" cy="160.0" r="1.1" fill="#a8ffe4" opacity="0.15"/><circle cx="160.0" cy="160.0" r="1.1" fill="#a8ffe4" opacity="0.16"/><circle cx="165.0" cy="160.0" r="1.1" fill="#a8ffe4" opacity="0.16"/><circle cx="170.0" cy="160.0" r="1.1" fill="#a8ffe4" opacity="0.17"/><circle cx="175.0" cy="160.0" r="1.1" fill="#a8ffe4" opacity="0.17"/><circle cx="185.0" cy="160.0" r="1.1" fill="#a8ffe4" opacity="0.18"/><circle cx="190.0" cy="160.0" r="1.1" fill="#a8ffe4" opacity="0.18"/><circle cx="200.0" cy="160.0" r="1.1" fill="#a8ffe4" opacity="0.18"/><circle cx="205.0" cy="160.0" r="1.1" fill="#a8ffe4" opacity="0.18"/><circle cx="215.0" cy="160.0" r="1.1" fill="#a8ffe4" opacity="0.18"/><circle cx="220.0" cy="160.0" r="1.1" fill="#a8ffe4" opacity="0.17"/><circle cx="225.0" cy="160.0" r="1.1" fill="#a8ffe4" opacity="0.17"/><circle cx="230.0" cy="160.0" r="1.1" fill="#a8ffe4" opacity="0.17"/><circle cx="235.0" cy="160.0" r="1.1" fill="#a8ffe4" opacity="0.16"/><circle cx="240.0" cy="160.0" r="1.1" fill="#a8ffe4" opacity="0.16"/><circle cx="245.0" cy="160.0" r="1.1" fill="#a8ffe4" opacity="0.15"/><circle cx="250.0" cy="160.0" r="1.1" fill="#a8ffe4" opacity="0.15"/><circle cx="255.0" cy="160.0" r="1.1" fill="#a8ffe4" opacity="0.14"/><circle cx="260.0" cy="160.0" r="1.1" fill="#a8ffe4" opacity="0.13"/><circle cx="275.0" cy="160.0" r="1.1" fill="#a8ffe4" opacity="0.11"/><circle cx="120.0" cy="165.0" r="1.1" fill="#a8ffe4" opacity="0.11"/><circle cx="125.0" cy="165.0" r="1.1" fill="#a8ffe4" opacity="0.12"/><circle cx="130.0" cy="165.0" r="1.1" fill="#a8ffe4" opacity="0.13"/><circle cx="135.0" cy="165.0" r="1.1" fill="#a8ffe4" opacity="0.14"/><circle cx="150.0" cy="165.0" r="1.1" fill="#a8ffe4" opacity="0.15"/><circle cx="155.0" cy="165.0" r="1.1" fill="#a8ffe4" opacity="0.16"/><circle cx="160.0" cy="165.0" r="1.1" fill="#a8ffe4" opacity="0.16"/><circle cx="165.0" cy="165.0" r="1.1" fill="#a8ffe4" opacity="0.17"/><circle cx="170.0" cy="165.0" r="1.1" fill="#a8ffe4" opacity="0.17"/><circle cx="175.0" cy="165.0" r="1.1" fill="#a8ffe4" opacity="0.17"/><circle cx="185.0" cy="165.0" r="1.1" fill="#a8ffe4" opacity="0.17"/><circle cx="190.0" cy="165.0" r="1.1" fill="#a8ffe4" opacity="0.17"/><circle cx="195.0" cy="165.0" r="1.1" fill="#a8ffe4" opacity="0.17"/><circle cx="200.0" cy="165.0" r="1.1" fill="#a8ffe4" opacity="0.17"/><circle cx="205.0" cy="165.0" r="1.1" fill="#a8ffe4" opacity="0.17"/><circle cx="210.0" cy="165.0" r="1.1" fill="#a8ffe4" opacity="0.16"/><circle cx="215.0" cy="165.0" r="1.1" fill="#a8ffe4" opacity="0.16"/><circle cx="220.0" cy="165.0" r="1.1" fill="#a8ffe4" opacity="0.16"/><circle cx="225.0" cy="165.0" r="1.1" fill="#a8ffe4" opacity="0.15"/><circle cx="230.0" cy="165.0" r="1.1" fill="#a8ffe4" opacity="0.15"/><circle cx="250.0" cy="165.0" r="1.1" fill="#a8ffe4" opacity="0.12"/><circle cx="255.0" cy="165.0" r="1.1" fill="#a8ffe4" opacity="0.11"/><circle cx="260.0" cy="165.0" r="1.1" fill="#a8ffe4" opacity="0.10"/><circle cx="120.0" cy="170.0" r="1.1" fill="#a8ffe4" opacity="0.11"/><circle cx="135.0" cy="170.0" r="1.1" fill="#a8ffe4" opacity="0.13"/><circle cx="140.0" cy="170.0" r="1.1" fill="#a8ffe4" opacity="0.13"/><circle cx="150.0" cy="170.0" r="1.1" fill="#a8ffe4" opacity="0.14"/><circle cx="155.0" cy="170.0" r="1.1" fill="#a8ffe4" opacity="0.14"/><circle cx="165.0" cy="170.0" r="1.1" fill="#a8ffe4" opacity="0.15"/><circle cx="170.0" cy="170.0" r="1.1" fill="#a8ffe4" opacity="0.15"/><circle cx="175.0" cy="170.0" r="1.1" fill="#a8ffe4" opacity="0.15"/><circle cx="190.0" cy="170.0" r="1.1" fill="#a8ffe4" opacity="0.14"/><circle cx="195.0" cy="170.0" r="1.1" fill="#a8ffe4" opacity="0.14"/><circle cx="200.0" cy="170.0" r="1.1" fill="#a8ffe4" opacity="0.14"/><circle cx="205.0" cy="170.0" r="1.1" fill="#a8ffe4" opacity="0.14"/><circle cx="215.0" cy="170.0" r="1.1" fill="#a8ffe4" opacity="0.13"/><circle cx="135.0" cy="175.0" r="1.1" fill="#a8ffe4" opacity="0.10"/><circle cx="145.0" cy="175.0" r="1.1" fill="#a8ffe4" opacity="0.11"/><circle cx="155.0" cy="175.0" r="1.1" fill="#a8ffe4" opacity="0.11"/><circle cx="165.0" cy="175.0" r="1.1" fill="#a8ffe4" opacity="0.11"/><circle cx="175.0" cy="175.0" r="1.1" fill="#a8ffe4" opacity="0.11"/><circle cx="180.0" cy="175.0" r="1.1" fill="#a8ffe4" opacity="0.10"/><circle cx="185.0" cy="175.0" r="1.1" fill="#a8ffe4" opacity="0.10"/><circle cx="42.0" cy="1.0" r="0.8" fill="#a8ffe4" opacity="0.10"/><circle cx="46.0" cy="1.0" r="0.8" fill="#a8ffe4" opacity="0.11"/><circle cx="50.0" cy="1.0" r="0.8" fill="#a8ffe4" opacity="0.12"/><circle cx="54.0" cy="1.0" r="0.8" fill="#a8ffe4" opacity="0.13"/><circle cx="62.0" cy="1.0" r="0.8" fill="#a8ffe4" opacity="0.13"/><circle cx="66.0" cy="1.0" r="0.8" fill="#a8ffe4" opacity="0.13"/><circle cx="70.0" cy="1.0" r="0.8" fill="#a8ffe4" opacity="0.12"/><circle cx="38.0" cy="5.0" r="0.8" fill="#a8ffe4" opacity="0.11"/><circle cx="42.0" cy="5.0" r="0.8" fill="#a8ffe4" opacity="0.13"/><circle cx="50.0" cy="5.0" r="0.8" fill="#a8ffe4" opacity="0.15"/><circle cx="54.0" cy="5.0" r="0.8" fill="#a8ffe4" opacity="0.15"/><circle cx="58.0" cy="5.0" r="0.8" fill="#a8ffe4" opacity="0.15"/><circle cx="62.0" cy="5.0" r="0.8" fill="#a8ffe4" opacity="0.15"/><circle cx="70.0" cy="5.0" r="0.8" fill="#a8ffe4" opacity="0.15"/><circle cx="74.0" cy="5.0" r="0.8" fill="#a8ffe4" opacity="0.14"/><circle cx="78.0" cy="5.0" r="0.8" fill="#a8ffe4" opacity="0.13"/><circle cx="82.0" cy="5.0" r="0.8" fill="#a8ffe4" opacity="0.11"/><circle cx="38.0" cy="9.0" r="0.8" fill="#a8ffe4" opacity="0.13"/><circle cx="42.0" cy="9.0" r="0.8" fill="#a8ffe4" opacity="0.14"/><circle cx="50.0" cy="9.0" r="0.8" fill="#a8ffe4" opacity="0.16"/><circle cx="54.0" cy="9.0" r="0.8" fill="#a8ffe4" opacity="0.17"/><circle cx="58.0" cy="9.0" r="0.8" fill="#a8ffe4" opacity="0.17"/><circle cx="62.0" cy="9.0" r="0.8" fill="#a8ffe4" opacity="0.17"/><circle cx="66.0" cy="9.0" r="0.8" fill="#a8ffe4" opacity="0.17"/><circle cx="74.0" cy="9.0" r="0.8" fill="#a8ffe4" opacity="0.15"/><circle cx="82.0" cy="9.0" r="0.8" fill="#a8ffe4" opacity="0.13"/><circle cx="86.0" cy="9.0" r="0.8" fill="#a8ffe4" opacity="0.11"/><circle cx="34.0" cy="13.0" r="0.8" fill="#a8ffe4" opacity="0.12"/><circle cx="38.0" cy="13.0" r="0.8" fill="#a8ffe4" opacity="0.14"/><circle cx="42.0" cy="13.0" r="0.8" fill="#a8ffe4" opacity="0.15"/><circle cx="46.0" cy="13.0" r="0.8" fill="#a8ffe4" opacity="0.16"/><circle cx="50.0" cy="13.0" r="0.8" fill="#a8ffe4" opacity="0.17"/><circle cx="54.0" cy="13.0" r="0.8" fill="#a8ffe4" opacity="0.18"/><circle cx="58.0" cy="13.0" r="0.8" fill="#a8ffe4" opacity="0.18"/><circle cx="62.0" cy="13.0" r="0.8" fill="#a8ffe4" opacity="0.18"/><circle cx="66.0" cy="13.0" r="0.8" fill="#a8ffe4" opacity="0.18"/><circle cx="70.0" cy="13.0" r="0.8" fill="#a8ffe4" opacity="0.17"/><circle cx="74.0" cy="13.0" r="0.8" fill="#a8ffe4" opacity="0.16"/><circle cx="78.0" cy="13.0" r="0.8" fill="#a8ffe4" opacity="0.15"/><circle cx="82.0" cy="13.0" r="0.8" fill="#a8ffe4" opacity="0.14"/><circle cx="38.0" cy="17.0" r="0.8" fill="#a8ffe4" opacity="0.14"/><circle cx="50.0" cy="17.0" r="0.8" fill="#a8ffe4" opacity="0.17"/><circle cx="54.0" cy="17.0" r="0.8" fill="#a8ffe4" opacity="0.18"/><circle cx="58.0" cy="17.0" r="0.8" fill="#a8ffe4" opacity="0.18"/><circle cx="62.0" cy="17.0" r="0.8" fill="#a8ffe4" opacity="0.18"/><circle cx="66.0" cy="17.0" r="0.8" fill="#a8ffe4" opacity="0.18"/><circle cx="70.0" cy="17.0" r="0.8" fill="#a8ffe4" opacity="0.17"/><circle cx="78.0" cy="17.0" r="0.8" fill="#a8ffe4" opacity="0.15"/><circle cx="82.0" cy="17.0" r="0.8" fill="#a8ffe4" opacity="0.14"/><circle cx="86.0" cy="17.0" r="0.8" fill="#a8ffe4" opacity="0.12"/><circle cx="34.0" cy="21.0" r="0.8" fill="#a8ffe4" opacity="0.11"/><circle cx="38.0" cy="21.0" r="0.8" fill="#a8ffe4" opacity="0.13"/><circle cx="46.0" cy="21.0" r="0.8" fill="#a8ffe4" opacity="0.15"/><circle cx="50.0" cy="21.0" r="0.8" fill="#a8ffe4" opacity="0.16"/><circle cx="58.0" cy="21.0" r="0.8" fill="#a8ffe4" opacity="0.17"/><circle cx="62.0" cy="21.0" r="0.8" fill="#a8ffe4" opacity="0.17"/><circle cx="70.0" cy="21.0" r="0.8" fill="#a8ffe4" opacity="0.16"/><circle cx="78.0" cy="21.0" r="0.8" fill="#a8ffe4" opacity="0.14"/><circle cx="42.0" cy="25.0" r="0.8" fill="#a8ffe4" opacity="0.13"/><circle cx="50.0" cy="25.0" r="0.8" fill="#a8ffe4" opacity="0.15"/><circle cx="54.0" cy="25.0" r="0.8" fill="#a8ffe4" opacity="0.15"/><circle cx="58.0" cy="25.0" r="0.8" fill="#a8ffe4" opacity="0.15"/><circle cx="66.0" cy="25.0" r="0.8" fill="#a8ffe4" opacity="0.15"/><circle cx="70.0" cy="25.0" r="0.8" fill="#a8ffe4" opacity="0.15"/><circle cx="74.0" cy="25.0" r="0.8" fill="#a8ffe4" opacity="0.14"/><circle cx="78.0" cy="25.0" r="0.8" fill="#a8ffe4" opacity="0.13"/><circle cx="82.0" cy="25.0" r="0.8" fill="#a8ffe4" opacity="0.11"/><circle cx="42.0" cy="29.0" r="0.8" fill="#a8ffe4" opacity="0.10"/><circle cx="46.0" cy="29.0" r="0.8" fill="#a8ffe4" opacity="0.11"/><circle cx="50.0" cy="29.0" r="0.8" fill="#a8ffe4" opacity="0.12"/><circle cx="54.0" cy="29.0" r="0.8" fill="#a8ffe4" opacity="0.13"/><circle cx="58.0" cy="29.0" r="0.8" fill="#a8ffe4" opacity="0.13"/><circle cx="62.0" cy="29.0" r="0.8" fill="#a8ffe4" opacity="0.13"/><circle cx="70.0" cy="29.0" r="0.8" fill="#a8ffe4" opacity="0.12"/><circle cx="78.0" cy="29.0" r="0.8" fill="#a8ffe4" opacity="0.10"/><line x1="291.0" y1="2.0" x2="305.0" y2="31.0" stroke="#a8ffe4" stroke-width="0.7" opacity="0.32"/><line x1="305.0" y1="31.0" x2="327.0" y2="47.0" stroke="#a8ffe4" stroke-width="0.7" opacity="0.32"/><line x1="327.0" y1="47.0" x2="356.0" y2="43.0" stroke="#a8ffe4" stroke-width="0.7" opacity="0.32"/><circle cx="291.0" cy="2.0" r="3.2" fill="#a8ffe4" opacity="0.42"/><circle cx="305.0" cy="31.0" r="2.4" fill="#a8ffe4" opacity="0.42"/><circle cx="327.0" cy="47.0" r="2.0" fill="#a8ffe4" opacity="0.42"/><circle cx="356.0" cy="43.0" r="2.2" fill="#a8ffe4" opacity="0.42"/><line x1="330.0" y1="9.0" x2="327.0" y2="15.0" stroke="#a8ffe4" stroke-width="0.7" opacity="0.32"/><line x1="327.0" y1="15.0" x2="341.0" y2="21.0" stroke="#a8ffe4" stroke-width="0.7" opacity="0.32"/><circle cx="330.0" cy="9.0" r="1.8" fill="#a8ffe4" opacity="0.42"/><circle cx="327.0" cy="15.0" r="2.4" fill="#a8ffe4" opacity="0.42"/><circle cx="341.0" cy="21.0" r="1.6" fill="#a8ffe4" opacity="0.42"/><line x1="223.0" y1="18.0" x2="242.0" y2="17.0" stroke="#a8ffe4" stroke-width="0.7" opacity="0.32"/><circle cx="223.0" cy="18.0" r="1.4" fill="#a8ffe4" opacity="0.42"/><circle cx="242.0" cy="17.0" r="2.2" fill="#a8ffe4" opacity="0.42"/><line x1="141.0" y1="40.0" x2="152.0" y2="30.0" stroke="#a8ffe4" stroke-width="0.7" opacity="0.32"/><line x1="152.0" y1="30.0" x2="151.0" y2="22.0" stroke="#a8ffe4" stroke-width="0.7" opacity="0.32"/><circle cx="141.0" cy="40.0" r="1.4" fill="#a8ffe4" opacity="0.42"/><circle cx="152.0" cy="30.0" r="1.6" fill="#a8ffe4" opacity="0.42"/><circle cx="151.0" cy="22.0" r="2.0" fill="#a8ffe4" opacity="0.42"/><line x1="161.0" y1="67.0" x2="172.0" y2="59.0" stroke="#a8ffe4" stroke-width="0.7" opacity="0.32"/><line x1="172.0" y1="59.0" x2="168.0" y2="51.0" stroke="#a8ffe4" stroke-width="0.7" opacity="0.32"/><circle cx="161.0" cy="67.0" r="1.6" fill="#a8ffe4" opacity="0.42"/><circle cx="172.0" cy="59.0" r="1.4" fill="#a8ffe4" opacity="0.42"/><circle cx="168.0" cy="51.0" r="1.2" fill="#a8ffe4" opacity="0.42"/><line x1="147.0" y1="80.0" x2="169.0" y2="74.0" stroke="#a8ffe4" stroke-width="0.7" opacity="0.32"/><line x1="169.0" y1="74.0" x2="189.0" y2="80.0" stroke="#a8ffe4" stroke-width="0.7" opacity="0.32"/><circle cx="147.0" cy="80.0" r="2.0" fill="#a8ffe4" opacity="0.42"/><circle cx="169.0" cy="74.0" r="1.2" fill="#a8ffe4" opacity="0.42"/><circle cx="189.0" cy="80.0" r="1.8" fill="#a8ffe4" opacity="0.42"/><line x1="247.0" y1="50.0" x2="266.0" y2="76.0" stroke="#a8ffe4" stroke-width="0.7" opacity="0.32"/><circle cx="247.0" cy="50.0" r="1.2" fill="#a8ffe4" opacity="0.42"/><circle cx="266.0" cy="76.0" r="2.2" fill="#a8ffe4" opacity="0.42"/><line x1="88.0" y1="53.0" x2="115.0" y2="58.0" stroke="#a8ffe4" stroke-width="0.7" opacity="0.32"/><circle cx="88.0" cy="53.0" r="1.4" fill="#a8ffe4" opacity="0.42"/><circle cx="115.0" cy="58.0" r="1.6" fill="#a8ffe4" opacity="0.42"/><line x1="126.0" y1="86.0" x2="130.0" y2="84.0" stroke="#a8ffe4" stroke-width="0.7" opacity="0.32"/><circle cx="126.0" cy="86.0" r="1.4" fill="#a8ffe4" opacity="0.42"/><circle cx="130.0" cy="84.0" r="1.6" fill="#a8ffe4" opacity="0.42"/><line x1="157.0" y1="102.0" x2="166.0" y2="101.0" stroke="#a8ffe4" stroke-width="0.7" opacity="0.32"/><circle cx="157.0" cy="102.0" r="1.4" fill="#a8ffe4" opacity="0.42"/><circle cx="166.0" cy="101.0" r="1.2" fill="#a8ffe4" opacity="0.42"/><line x1="159.0" y1="109.0" x2="166.0" y2="117.0" stroke="#a8ffe4" stroke-width="0.7" opacity="0.32"/><circle cx="159.0" cy="109.0" r="1.2" fill="#a8ffe4" opacity="0.42"/><circle cx="166.0" cy="117.0" r="1.2" fill="#a8ffe4" opacity="0.42"/><line x1="341.0" y1="67.0" x2="345.0" y2="80.0" stroke="#a8ffe4" stroke-width="0.7" opacity="0.32"/><line x1="345.0" y1="80.0" x2="354.0" y2="79.0" stroke="#a8ffe4" stroke-width="0.7" opacity="0.32"/><line x1="354.0" y1="79.0" x2="350.0" y2="67.0" stroke="#a8ffe4" stroke-width="0.7" opacity="0.32"/><circle cx="341.0" cy="67.0" r="1.2" fill="#a8ffe4" opacity="0.42"/><circle cx="345.0" cy="80.0" r="1.8" fill="#a8ffe4" opacity="0.42"/><circle cx="354.0" cy="79.0" r="1.6" fill="#a8ffe4" opacity="0.42"/><circle cx="350.0" cy="67.0" r="1.4" fill="#a8ffe4" opacity="0.42"/><line x1="366.0" y1="70.0" x2="392.0" y2="72.0" stroke="#a8ffe4" stroke-width="0.7" opacity="0.32"/><circle cx="366.0" cy="70.0" r="1.4" fill="#a8ffe4" opacity="0.42"/><circle cx="392.0" cy="72.0" r="1.2" fill="#a8ffe4" opacity="0.42"/><line x1="425.0" y1="73.0" x2="366.0" y2="70.0" stroke="#a8ffe4" stroke-width="0.7" opacity="0.32"/><circle cx="425.0" cy="73.0" r="3.0" fill="#a8ffe4" opacity="0.42"/><circle cx="366.0" cy="70.0" r="1.2" fill="#a8ffe4" opacity="0.42"/><line x1="425.0" y1="73.0" x2="446.0" y2="52.0" stroke="#a8ffe4" stroke-width="0.7" opacity="0.32"/><line x1="446.0" y1="52.0" x2="484.0" y2="45.0" stroke="#a8ffe4" stroke-width="0.7" opacity="0.32"/><circle cx="425.0" cy="73.0" r="3.0" fill="#a8ffe4" opacity="0.42"/><circle cx="446.0" cy="52.0" r="1.4" fill="#a8ffe4" opacity="0.42"/><circle cx="484.0" cy="45.0" r="1.6" fill="#a8ffe4" opacity="0.37"/><line x1="394.0" y1="6.0" x2="403.0" y2="14.0" stroke="#a8ffe4" stroke-width="0.7" opacity="0.32"/><line x1="403.0" y1="14.0" x2="420.0" y2="12.0" stroke="#a8ffe4" stroke-width="0.7" opacity="0.32"/><circle cx="394.0" cy="6.0" r="1.8" fill="#a8ffe4" opacity="0.42"/><circle cx="403.0" cy="14.0" r="1.6" fill="#a8ffe4" opacity="0.42"/><circle cx="420.0" cy="12.0" r="1.4" fill="#a8ffe4" opacity="0.42"/><line x1="455.0" y1="15.0" x2="420.0" y2="35.0" stroke="#a8ffe4" stroke-width="0.7" opacity="0.32"/><line x1="420.0" y1="35.0" x2="404.0" y2="36.0" stroke="#a8ffe4" stroke-width="0.7" opacity="0.32"/><circle cx="455.0" cy="15.0" r="1.6" fill="#a8ffe4" opacity="0.42"/><circle cx="420.0" cy="35.0" r="1.8" fill="#a8ffe4" opacity="0.42"/><circle cx="404.0" cy="36.0" r="1.2" fill="#a8ffe4" opacity="0.42"/><line x1="478.0" y1="36.0" x2="490.0" y2="0.0" stroke="#a8ffe4" stroke-width="0.7" opacity="0.29"/><circle cx="478.0" cy="36.0" r="2.4" fill="#a8ffe4" opacity="0.39"/><circle cx="490.0" cy="0.0" r="1.2" fill="#a8ffe4" opacity="0.36"/><line x1="478.0" y1="36.0" x2="500.0" y2="66.0" stroke="#a8ffe4" stroke-width="0.7" opacity="0.29"/><circle cx="478.0" cy="36.0" r="2.4" fill="#a8ffe4" opacity="0.39"/><circle cx="500.0" cy="66.0" r="2.0" fill="#a8ffe4" opacity="0.34"/><line x1="455.0" y1="62.0" x2="478.0" y2="66.0" stroke="#a8ffe4" stroke-width="0.7" opacity="0.32"/><line x1="478.0" y1="66.0" x2="494.0" y2="82.0" stroke="#a8ffe4" stroke-width="0.7" opacity="0.29"/><circle cx="455.0" cy="62.0" r="1.2" fill="#a8ffe4" opacity="0.42"/><circle cx="478.0" cy="66.0" r="2.4" fill="#a8ffe4" opacity="0.39"/><circle cx="494.0" cy="82.0" r="1.4" fill="#a8ffe4" opacity="0.36"/><line x1="520.0" y1="20.0" x2="548.0" y2="8.0" stroke="#a8ffe4" stroke-width="0.7" opacity="0.23"/><line x1="548.0" y1="8.0" x2="566.0" y2="30.0" stroke="#a8ffe4" stroke-width="0.7" opacity="0.19"/><circle cx="520.0" cy="20.0" r="1.8" fill="#a8ffe4" opacity="0.31"/><circle cx="548.0" cy="8.0" r="1.4" fill="#a8ffe4" opacity="0.25"/><circle cx="566.0" cy="30.0" r="1.2" fill="#a8ffe4" opacity="0.22"/><line x1="528.0" y1="50.0" x2="556.0" y2="60.0" stroke="#a8ffe4" stroke-width="0.7" opacity="0.22"/><line x1="556.0" y1="60.0" x2="590.0" y2="44.0" stroke="#a8ffe4" stroke-width="0.7" opacity="0.18"/><circle cx="528.0" cy="50.0" r="2.2" fill="#a8ffe4" opacity="0.29"/><circle cx="556.0" cy="60.0" r="1.2" fill="#a8ffe4" opacity="0.24"/><circle cx="590.0" cy="44.0" r="1.6" fill="#a8ffe4" opacity="0.17"/><line x1="612.0" y1="12.0" x2="634.0" y2="28.0" stroke="#a8ffe4" stroke-width="0.7" opacity="0.10"/><circle cx="612.0" cy="12.0" r="1.4" fill="#a8ffe4" opacity="0.13"/><circle cx="634.0" cy="28.0" r="1.2" fill="#a8ffe4" opacity="0.10"/><line x1="53.0" y1="8.0" x2="62.0" y2="18.0" stroke="#a8ffe4" stroke-width="0.7" opacity="0.32"/><circle cx="53.0" cy="8.0" r="1.2" fill="#a8ffe4" opacity="0.42"/><circle cx="62.0" cy="18.0" r="1.4" fill="#a8ffe4" opacity="0.42"/><line x1="243.0" y1="90.0" x2="275.0" y2="92.0" stroke="#a8ffe4" stroke-width="0.7" opacity="0.32"/><circle cx="243.0" cy="90.0" r="1.8" fill="#a8ffe4" opacity="0.42"/><circle cx="275.0" cy="92.0" r="1.2" fill="#a8ffe4" opacity="0.42"/><circle cx="75.0" cy="22.0" r="2.6" fill="#a8ffe4" opacity="0.40"/><circle cx="207.0" cy="124.0" r="3.0" fill="#a8ffe4" opacity="0.40"/><circle cx="285.0" cy="77.0" r="1.6" fill="#a8ffe4" opacity="0.40"/><circle cx="262.0" cy="20.0" r="1.2" fill="#a8ffe4" opacity="0.40"/><circle cx="238.0" cy="25.0" r="1.2" fill="#a8ffe4" opacity="0.40"/><circle cx="196.0" cy="35.0" r="1.4" fill="#a8ffe4" opacity="0.40"/><circle cx="370.0" cy="110.0" r="1.2" fill="#a8ffe4" opacity="0.40"/><circle cx="360.0" cy="128.0" r="1.0" fill="#a8ffe4" opacity="0.40"/><circle cx="300.0" cy="150.0" r="1.2" fill="#a8ffe4" opacity="0.40"/><circle cx="120.0" cy="120.0" r="1.0" fill="#a8ffe4" opacity="0.40"/><circle cx="140.0" cy="135.0" r="1.0" fill="#a8ffe4" opacity="0.40"/><line x1="150" y1="118" x2="230" y2="150" stroke="#a8ffe4" stroke-width="0.6" opacity="0.16"/><line x1="170" y1="140" x2="300" y2="165" stroke="#a8ffe4" stroke-width="0.6" opacity="0.16"/><line x1="205" y1="124" x2="260" y2="136" stroke="#a8ffe4" stroke-width="0.6" opacity="0.16"/><line x1="230" y1="150" x2="330" y2="160" stroke="#a8ffe4" stroke-width="0.6" opacity="0.16"/><line x1="180" y1="160" x2="240" y2="175" stroke="#a8ffe4" stroke-width="0.6" opacity="0.16"/><line x1="260" y1="165" x2="340" y2="178" stroke="#a8ffe4" stroke-width="0.6" opacity="0.16"/><line x1="100" y1="100" x2="150" y2="140" stroke="#a8ffe4" stroke-width="0.6" opacity="0.16"/><line x1="110" y1="70" x2="135" y2="110" stroke="#a8ffe4" stroke-width="0.6" opacity="0.16"/><g fill="none" stroke="#a8ffe4" stroke-width="0.7" opacity="0.10"><ellipse cx="360" cy="-60" rx="340" ry="260"/><ellipse cx="360" cy="-60" rx="318" ry="248"/><ellipse cx="360" cy="-60" rx="296" ry="236"/></g></svg>
 <div class="search"><span>请输入关键字</span>
  <svg width="28" height="26" viewBox="0 0 28 26"><circle cx="12" cy="10.4" r="8" fill="none" stroke="#fff" stroke-width="1.6"/><path d="M17.9 16.4 L22.6 21" stroke="#fff" stroke-width="1.8" stroke-linecap="round"/></svg>
 </div>
 <a class="login" style="left:1224px">登录</a>
 <a class="login" style="left:1272px">注册</a>
 <div class="t1">全国公共资源交易平台(四川省)</div>
 <div class="t2">四川省公共资源交易信息网</div>
 <div class="nav">
  <a>首页</a><a>新闻资讯</a><a class="on">交易信息</a><a>场地预约</a><a>远程评标</a><a>综合评标专家库</a><a>政策法规</a><a>大数据分析</a><a>诚信监督</a><a>办事指南</a><a>川渝共享专区</a>
 </div>
</div>

<div class="crumb">
 <svg width="18" height="18" viewBox="0 0 18 18"><path d="M8.8 1 L16.7 7.9 L16 8.5 L16 16.8 L11.6 16.8 L11.6 12.6 L7.4 12.6 L7.4 16.8 L1.6 16.8 L1.6 8.5 L0.9 7.9 Z" fill="#a4a7ae" stroke="#a4a7ae" stroke-width="1.1" stroke-linejoin="round"/></svg>
 <span class="h">首页</span>
 <span class="p"><i>&gt;</i> 交易信息<i>&gt;</i> 工程建设<i>&gt;</i> 评标结果公示</span>
</div>

<div class="cline"></div>
<div class="tabs">
 <a style="left:0;width:89px">招标公告</a>
 <a style="left:94px;width:148px">资格预审补遗<i class="sl">/</i>澄清</a>
 <a style="left:247px;width:148px">招标文件补遗<i class="sl">/</i>澄清</a>
 <a style="left:400px;width:129px">流标或终止公告</a>
 <a style="left:534px;width:89px">开标记录</a>
 <a class="on" style="left:628px;width:117px">评标结果公示</a>
 <a style="left:749px;width:117px">中标结果公示</a>
 <a style="left:870px;width:90px">签约履行</a>
</div>

<div class="lst sel" style="top:292px"><span>巴中市恩阳区<i>2023-2025</i>年高标准农田建设项目一恩阳区<i>2024</i>年财政转移支付高标准农田建设项目监理<b class="pl">（</b>监理二标段<b class="pr">）</b></span></div>
<div class="lst" style="top:319.5px"><span>巴中市恩阳区<i>2023-2025</i>年高标准农田建设项目一恩阳区<i>2024</i>年财政转移支付高标准农田建设项目监理<b class="pl">（</b>监理一标段<b class="pr">）</b></span></div>

<div class="title">巴中市恩阳区<i>2023-2025</i>年高标准农田建设项目一恩阳区<i>2024</i>年财政转移支付高标准农田建设项目监理<br><b class="pl">（</b>监理二标段<b class="pr">）</b></div>
<div class="meta"><span style="left:373px">发布时间<b class="pc">：</b><i style="letter-spacing:0">2024-10-11 15:24:30</i></span><span style="left:584px;letter-spacing:0.12px">来源<b class="pc">：</b>巴中市政务服务和公共资源交易服务中心</span><span style="left:879px">浏览次数<b class="pc">：</b><i>17</i></span><span style="left:979px">原文链接</span></div>
<div class="hr"></div>
<div class="sub">巴中市恩阳区<i>2023-2025</i>年高标准农田建设项目一恩阳区<i>2024</i>年财政转移支付高标准农田建设项目监理<b class="pl">（</b>监理二标段<b class="pr">）</b>评标结果公示</div>

<table>
 <colgroup><col style="width:203px"><col style="width:276px"><col style="width:120px"><col style="width:120px"><col style="width:120px"><col style="width:48px"><col style="width:192px"><col style="width:120px"></colgroup>
 <tr class="h28"><td>项目及标段名称</td><td colspan="7">巴中市恩阳区<i>2023-2025</i>年高标准农田建设项目一恩阳区<i>2024</i>年财政转移支付高标准农田建设项目监理<b class="pl">（</b>监理二标段<b class="pr">）</b></td></tr>
 <tr><td>项目业主</td><td colspan="2">巴中市恩阳区农业发展有限责任公司</td><td colspan="2">项目业主联系电话</td><td colspan="3"><i>0827-8585577</i></td></tr>
 <tr><td>招标人</td><td colspan="2">巴中市恩阳区农业发展有限责任公司</td><td colspan="2">招标人联系电话</td><td colspan="3"><i>0827-8585577</i></td></tr>
 <tr class="h28"><td>招标代理机构</td><td colspan="2">四川诺邦建设项目管理有限公司</td><td colspan="2">招标代理机构联系电话</td><td colspan="3"><i>0830-2297877</i></td></tr>
 <tr><td>开标地点</td><td colspan="2">巴中市经济开发区红星路<i>70</i>号(市民之家<i>4</i>楼)</td><td colspan="2">开标时间</td><td colspan="3"><i style="letter-spacing:-0.004em">20241010 - 09:00:00</i></td></tr>
 <tr><td>公示期</td><td colspan="2"><i>2024</i>年<i>10</i>月<i>12</i>日 至 <i>2024</i>年<i>10</i>月<i>17</i>日</td><td colspan="2">投标最高限价<b class="pl">（</b>元<b class="pr">）</b></td><td colspan="3"><i>1167755.00</i></td></tr>
 <tr class="h28"><td class="c">中标候选人及排序</td><td class="c" colspan="3">中标候选人名称</td><td class="c" colspan="2">投标报价<b class="pl">（</b>元<b class="pr">）</b></td><td class="c">经评审的投标价<b class="pl">（</b>元<b class="pr">）</b></td><td class="c">综合评标得分</td></tr>
 <tr><td class="c">第一名</td><td class="c" colspan="3">中申华达建设工程管理有限公司</td><td class="c" colspan="2"><i>1088348.00</i></td><td class="c"><i>1088348.00</i></td><td class="c"><i>96.35</i></td></tr>
 <tr class="h28"><td class="c">第二名</td><td class="c" colspan="3">康立时代建设集团有限公司</td><td class="c" colspan="2"><i>1109367.00</i></td><td class="c"><i>1109367.00</i></td><td class="c"><i>95.22</i></td></tr>
 <tr><td class="c">第三名</td><td class="c" colspan="3">成都交大工程建设集团有限公司</td><td class="c" colspan="2"><i>1079005.00</i></td><td class="c"><i>1079005.00</i></td><td class="c"><i>87.06</i></td></tr>
 <tr><td colspan="8">第一中标候选人项目管理机构主要人员<b class="pl">（</b>中申华达建设工程管理有限公司<b class="pr">）</b></td></tr>
 <tr><td class="c" rowspan="2" style="height:55px">职务</td><td class="c" rowspan="2">姓名</td><td class="c" colspan="3" style="padding-top:4.5px">执业或职业资格</td><td class="c" colspan="3" style="padding-top:4.5px">职称</td></tr>
 <tr><td class="c" colspan="2">证书名称</td><td class="c">证书编号</td><td class="c" colspan="2">职称专业</td><td class="c">级别</td></tr>
</table>
</body>
</html>
